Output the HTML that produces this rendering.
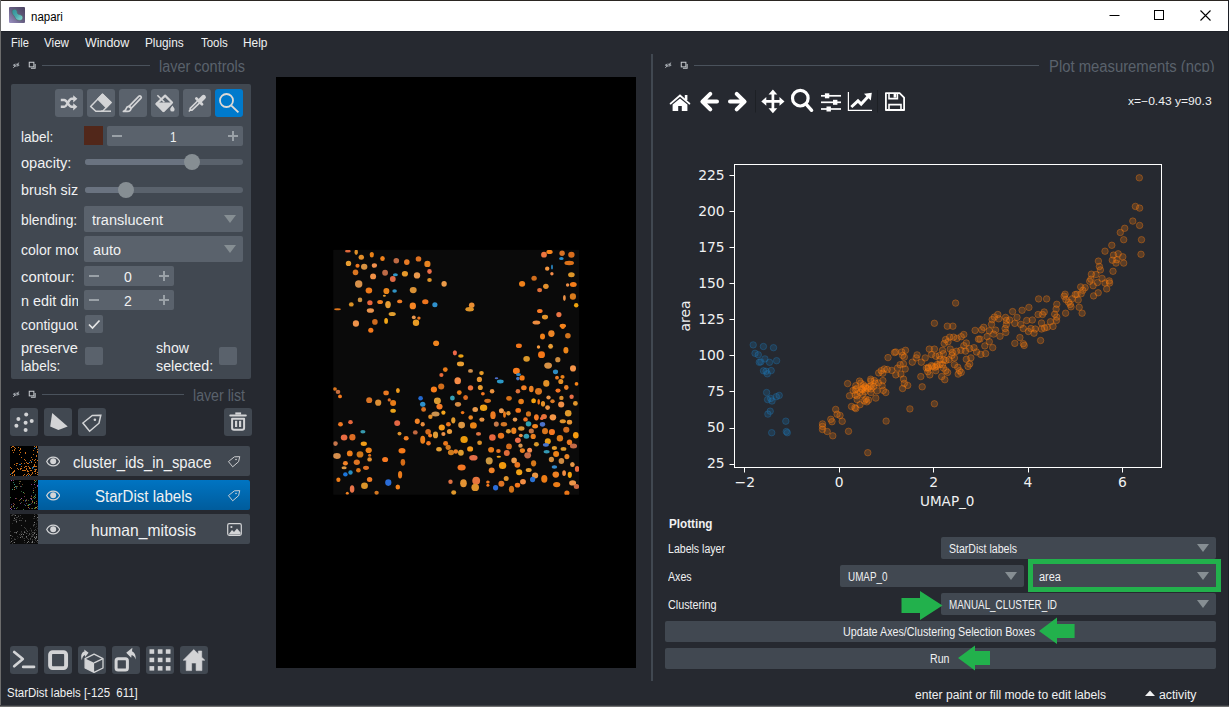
<!DOCTYPE html>
<html><head><meta charset="utf-8"><title>napari</title>
<style>
html,body{margin:0;padding:0;background:#262930;overflow:hidden}
#w{position:relative;width:1229px;height:707px;overflow:hidden;background:#262930}
.r{position:absolute;display:block}
.t{position:absolute;white-space:pre;transform-origin:0 50%;display:block}
.clip{position:absolute;overflow:hidden}
</style></head><body><div id="w">
<div class="r" style="left:0px;top:0px;width:1229px;height:1px;background:#2b2622;border-radius:0px;"></div>
<div class="r" style="left:1px;top:1px;width:1227px;height:30px;background:#ffffff;border-radius:0px;"></div>
<div class="r" style="left:1px;top:31px;width:1227px;height:1px;background:#1d2028;border-radius:0px;"></div>
<div class="r" style="left:0px;top:0px;width:1px;height:707px;background:#6c6c6c;border-radius:0px;"></div>
<div class="r" style="left:1228px;top:0px;width:1px;height:707px;background:#1c1f26;border-radius:0px;"></div>
<div class="r" style="left:0px;top:705px;width:1229px;height:1px;background:#3c3e43;border-radius:0px;"></div>
<div class="r" style="left:0px;top:706px;width:1229px;height:1px;background:#707070;border-radius:0px;"></div>
<svg class="r" style="left:9px;top:7px;" width="16" height="16" viewBox="0 0 16 16"><defs><linearGradient id="ig" x1="1" y1="0" x2="0" y2="1"><stop offset="0" stop-color="#4a4260"/><stop offset="0.55" stop-color="#6a6286"/><stop offset="1" stop-color="#9c93c4"/></linearGradient><linearGradient id="ib" x1="0" y1="0" x2="1" y2="1"><stop offset="0" stop-color="#2f8d96"/><stop offset="0.5" stop-color="#4aa8ac"/><stop offset="1" stop-color="#8cdcd6"/></linearGradient></defs><rect x="0" y="0" width="16" height="16" rx="1" fill="url(#ig)"/><path d="M3 5C2.6 3 4.4 2.2 5.6 2.2C7.4 2.2 8.2 3.6 8.2 5C8.2 6.6 9 7.4 10.6 7.6C12.8 7.8 14 9.4 13.8 11C13.6 12.8 12 13.6 10 13.4C8 13.2 6.8 12.4 6 10.6C5.4 9.2 4.8 8.6 4 7.8C3.4 7.2 3.2 6.2 3 5Z" fill="url(#ib)" stroke="#5a5e58" stroke-width="0.5"/></svg>
<span class="t" style="left:30.80px;top:10.62px;font:12.5px/12.5px 'Liberation Sans',sans-serif;color:#000000;transform:scaleX(0.9180);">napari</span>
<svg class="r" style="left:1100px;top:0px;" width="127" height="31" viewBox="0 0 127 31"><path d="M9.5 15.5H19.5" stroke="#000" stroke-width="1"/><rect x="54.5" y="10.5" width="9" height="9" fill="none" stroke="#000" stroke-width="1"/><path d="M100.5 10.5L110.5 20.5M110.5 10.5L100.5 20.5" stroke="#000" stroke-width="1.1"/></svg>
<span class="t" style="left:10.70px;top:36.62px;font:12.5px/12.5px 'Liberation Sans',sans-serif;color:#f0f1f2;transform:scaleX(0.8837);">File</span>
<span class="t" style="left:44.00px;top:36.62px;font:12.5px/12.5px 'Liberation Sans',sans-serif;color:#f0f1f2;transform:scaleX(0.9304);">View</span>
<span class="t" style="left:85.00px;top:36.62px;font:12.5px/12.5px 'Liberation Sans',sans-serif;color:#f0f1f2;transform:scaleX(0.9942);">Window</span>
<span class="t" style="left:145.40px;top:36.62px;font:12.5px/12.5px 'Liberation Sans',sans-serif;color:#f0f1f2;transform:scaleX(0.9439);">Plugins</span>
<span class="t" style="left:200.50px;top:36.62px;font:12.5px/12.5px 'Liberation Sans',sans-serif;color:#f0f1f2;transform:scaleX(0.9150);">Tools</span>
<span class="t" style="left:243.30px;top:36.62px;font:12.5px/12.5px 'Liberation Sans',sans-serif;color:#f0f1f2;transform:scaleX(0.9491);">Help</span>
<svg class="r" style="left:12px;top:60.7px;" width="8.4" height="8.4" viewBox="0 0 10 10"><path d="M1 5 C2.5 2.8 7.5 2.8 9 5 C7.5 7.2 2.5 7.2 1 5Z" fill="#9aa0a6"/><circle cx="5" cy="5" r="1.3" fill="#262930"/><path d="M1.5 8 L8.5 2" stroke="#c8ccd0" stroke-width="1"/></svg>
<svg class="r" style="left:28px;top:61.2px;" width="8.4" height="8.4" viewBox="0 0 10 10"><rect x="1.5" y="1.5" width="5.5" height="5.5" fill="none" stroke="#c8ccd0" stroke-width="1.2"/><path d="M3.5 8.5H8.5V3.5" fill="none" stroke="#c8ccd0" stroke-width="1.2"/></svg>
<div class="r" style="left:42px;top:65px;width:108px;height:1px;background:#4a525c;border-radius:0px;"></div>
<span class="t" style="left:159.00px;top:58.99px;font:15.6px/15.6px 'Liberation Sans',sans-serif;color:#5a626c;transform:scaleX(0.9270);">layer controls</span>
<div class="r" style="left:157px;top:72.4px;width:92px;height:6.599999999999994px;background:#262930;border-radius:0px;"></div>
<div class="r" style="left:11px;top:84px;width:240px;height:295px;background:#414851;border-radius:2px;"></div>
<div class="r" style="left:55px;top:89px;width:28px;height:28px;background:#5a626c;border-radius:3px;"></div>
<div class="r" style="left:87px;top:89px;width:28px;height:28px;background:#5a626c;border-radius:3px;"></div>
<div class="r" style="left:119px;top:89px;width:28px;height:28px;background:#5a626c;border-radius:3px;"></div>
<div class="r" style="left:151px;top:89px;width:28px;height:28px;background:#5a626c;border-radius:3px;"></div>
<div class="r" style="left:183px;top:89px;width:28px;height:28px;background:#5a626c;border-radius:3px;"></div>
<div class="r" style="left:215px;top:89px;width:28px;height:28px;background:#007acc;border-radius:3px;"></div>
<div class="r" style="left:84px;top:126px;width:19px;height:19px;background:#51271a;border-radius:0px;"></div>
<div class="r" style="left:107px;top:126px;width:136px;height:20px;background:#5a626c;border-radius:2px;"></div>
<span class="t" style="left:21.00px;top:128.68px;font:15.5px/15.5px 'Liberation Sans',sans-serif;color:#f0f1f2;transform:scaleX(0.8717);">label:</span>
<div class="r" style="left:112px;top:134.95000000000002px;width:9.799999999999997px;height:1.6999999999999886px;background:#9aa1a7;border-radius:0px;"></div>
<div class="r" style="left:228px;top:134.95000000000002px;width:10px;height:1.6999999999999886px;background:#9aa1a7;border-radius:0px;"></div>
<div class="r" style="left:232.15px;top:130.8px;width:1.6999999999999886px;height:10.0px;background:#9aa1a7;border-radius:0px;"></div>
<span class="t" style="left:169.50px;top:128.68px;font:15.5px/15.5px 'Liberation Sans',sans-serif;color:#f0f1f2;transform:scaleX(0.7540);">1</span>
<span class="t" style="left:21.00px;top:154.68px;font:15.5px/15.5px 'Liberation Sans',sans-serif;color:#f0f1f2;transform:scaleX(0.9416);">opacity:</span>
<div class="r" style="left:85px;top:159px;width:158px;height:6px;background:#5a626c;border-radius:3px;"></div>
<div class="r" style="left:85px;top:159px;width:107px;height:6px;background:#6a7380;border-radius:3px;"></div>
<div class="r" style="left:184px;top:154px;width:16px;height:16px;background:#868e93;border-radius:8px;"></div>
<div class="clip" style="left:21.00px;top:179.18px;width:57.00px;height:23.5px"><span class="t" style="left:0;top:3px;font:15.5px/15.5px 'Liberation Sans',sans-serif;color:#f0f1f2;transform:scaleX(0.9190);">brush size:</span></div>
<div class="r" style="left:85px;top:187px;width:158px;height:6px;background:#5a626c;border-radius:3px;"></div>
<div class="r" style="left:85px;top:187px;width:41px;height:6px;background:#6a7380;border-radius:3px;"></div>
<div class="r" style="left:118px;top:182px;width:16px;height:16px;background:#868e93;border-radius:8px;"></div>
<span class="t" style="left:21.00px;top:212.28px;font:15.5px/15.5px 'Liberation Sans',sans-serif;color:#f0f1f2;transform:scaleX(0.8932);">blending:</span>
<div class="r" style="left:84px;top:206px;width:159px;height:26px;background:#5a626c;border-radius:2px;"></div>
<span class="t" style="left:92.00px;top:212.08px;font:15.5px/15.5px 'Liberation Sans',sans-serif;color:#f0f1f2;transform:scaleX(0.9364);">translucent</span>
<svg class="r" style="left:224px;top:215px;" width="12" height="8" viewBox="0 0 12 8"><path d="M0 0H12L6 8Z" fill="#868e93"/></svg>
<div class="clip" style="left:21.00px;top:239.28px;width:57.00px;height:23.5px"><span class="t" style="left:0;top:3px;font:15.5px/15.5px 'Liberation Sans',sans-serif;color:#f0f1f2;transform:scaleX(0.9064);">color mode:</span></div>
<div class="r" style="left:84px;top:236px;width:159px;height:26px;background:#5a626c;border-radius:2px;"></div>
<span class="t" style="left:92.50px;top:242.08px;font:15.5px/15.5px 'Liberation Sans',sans-serif;color:#f0f1f2;transform:scaleX(0.9281);">auto</span>
<svg class="r" style="left:224px;top:245px;" width="12" height="8" viewBox="0 0 12 8"><path d="M0 0H12L6 8Z" fill="#868e93"/></svg>
<span class="t" style="left:21.00px;top:268.78px;font:15.5px/15.5px 'Liberation Sans',sans-serif;color:#f0f1f2;transform:scaleX(0.9552);">contour:</span>
<div class="r" style="left:84px;top:266px;width:90px;height:20px;background:#5a626c;border-radius:2px;"></div>
<div class="r" style="left:89px;top:274.95px;width:9.799999999999997px;height:1.7000000000000455px;background:#9aa1a7;border-radius:0px;"></div>
<div class="r" style="left:159px;top:274.95px;width:10px;height:1.7000000000000455px;background:#9aa1a7;border-radius:0px;"></div>
<div class="r" style="left:163.15px;top:270.8px;width:1.6999999999999886px;height:10.0px;background:#9aa1a7;border-radius:0px;"></div>
<span class="t" style="left:124.00px;top:268.78px;font:15.5px/15.5px 'Liberation Sans',sans-serif;color:#f0f1f2;transform:scaleX(0.9048);">0</span>
<div class="clip" style="left:21.00px;top:290.08px;width:57.00px;height:23.5px"><span class="t" style="left:0;top:3px;font:15.5px/15.5px 'Liberation Sans',sans-serif;color:#f0f1f2;transform:scaleX(0.9285);">n edit dim:</span></div>
<div class="r" style="left:84px;top:290px;width:90px;height:20px;background:#5a626c;border-radius:2px;"></div>
<div class="r" style="left:89px;top:299.25px;width:9.799999999999997px;height:1.7000000000000455px;background:#9aa1a7;border-radius:0px;"></div>
<div class="r" style="left:159px;top:299.25px;width:10px;height:1.7000000000000455px;background:#9aa1a7;border-radius:0px;"></div>
<div class="r" style="left:163.15px;top:295.1px;width:1.6999999999999886px;height:10.0px;background:#9aa1a7;border-radius:0px;"></div>
<span class="t" style="left:124.00px;top:292.78px;font:15.5px/15.5px 'Liberation Sans',sans-serif;color:#f0f1f2;transform:scaleX(0.9048);">2</span>
<div class="clip" style="left:21.00px;top:313.88px;width:57.00px;height:23.5px"><span class="t" style="left:0;top:3px;font:15.5px/15.5px 'Liberation Sans',sans-serif;color:#f0f1f2;transform:scaleX(0.8998);">contiguous:</span></div>
<div class="r" style="left:85px;top:315px;width:18px;height:18px;background:#5a626c;border-radius:2px;"></div>
<svg class="r" style="left:85px;top:315px;" width="18" height="18" viewBox="0 0 18 18"><path d="M4 9.5L7.5 13L14.5 5.5" fill="none" stroke="#e6e6e6" stroke-width="1.7"/></svg>
<span class="t" style="left:21.00px;top:339.58px;font:15.5px/15.5px 'Liberation Sans',sans-serif;color:#f0f1f2;transform:scaleX(0.9418);">preserve</span>
<span class="t" style="left:21.00px;top:357.58px;font:15.5px/15.5px 'Liberation Sans',sans-serif;color:#f0f1f2;transform:scaleX(0.8771);">labels:</span>
<div class="r" style="left:85px;top:347px;width:18px;height:18px;background:#5a626c;border-radius:2px;"></div>
<span class="t" style="left:156.00px;top:339.58px;font:15.5px/15.5px 'Liberation Sans',sans-serif;color:#f0f1f2;transform:scaleX(0.9120);">show</span>
<span class="t" style="left:156.00px;top:357.58px;font:15.5px/15.5px 'Liberation Sans',sans-serif;color:#f0f1f2;transform:scaleX(0.9220);">selected:</span>
<div class="r" style="left:219px;top:347px;width:18px;height:18px;background:#5a626c;border-radius:2px;"></div>
<svg class="r" style="left:12px;top:389.7px;" width="8.4" height="8.4" viewBox="0 0 10 10"><path d="M1 5 C2.5 2.8 7.5 2.8 9 5 C7.5 7.2 2.5 7.2 1 5Z" fill="#9aa0a6"/><circle cx="5" cy="5" r="1.3" fill="#262930"/><path d="M1.5 8 L8.5 2" stroke="#c8ccd0" stroke-width="1"/></svg>
<svg class="r" style="left:28px;top:390.2px;" width="8.4" height="8.4" viewBox="0 0 10 10"><rect x="1.5" y="1.5" width="5.5" height="5.5" fill="none" stroke="#c8ccd0" stroke-width="1.2"/><path d="M3.5 8.5H8.5V3.5" fill="none" stroke="#c8ccd0" stroke-width="1.2"/></svg>
<div class="r" style="left:42px;top:394px;width:142px;height:1px;background:#4a525c;border-radius:0px;"></div>
<span class="t" style="left:193.00px;top:387.99px;font:15.6px/15.6px 'Liberation Sans',sans-serif;color:#5a626c;transform:scaleX(0.9089);">layer list</span>
<div class="r" style="left:191px;top:401.4px;width:58px;height:6.600000000000023px;background:#262930;border-radius:0px;"></div>
<div class="r" style="left:10px;top:408px;width:28px;height:28px;background:#414851;border-radius:3px;"></div>
<div class="r" style="left:44px;top:408px;width:28px;height:28px;background:#414851;border-radius:3px;"></div>
<div class="r" style="left:78px;top:408px;width:28px;height:28px;background:#414851;border-radius:3px;"></div>
<div class="r" style="left:224px;top:408px;width:28px;height:28px;background:#414851;border-radius:3px;"></div>
<div class="r" style="left:10px;top:446px;width:240px;height:30px;background:#414851;border-radius:2px;"></div>
<div class="r" style="left:10px;top:446px;width:28px;height:30px;background:#000;border-radius:0px;"></div>
<span class="t" style="left:73.00px;top:453.53px;font:16.5px/16.5px 'Liberation Sans',sans-serif;color:#f0f1f2;transform:scaleX(0.8988);">cluster_ids_in_space</span>
<div class="r" style="left:10px;top:480px;width:240px;height:30px;background:#0070bb;border-radius:2px;background:linear-gradient(#0074c2,#005c9c);"></div>
<div class="r" style="left:10px;top:480px;width:28px;height:30px;background:#000;border-radius:0px;"></div>
<span class="t" style="left:94.50px;top:487.53px;font:16.5px/16.5px 'Liberation Sans',sans-serif;color:#f0f1f2;transform:scaleX(0.9119);">StarDist labels</span>
<div class="r" style="left:10px;top:514px;width:240px;height:30px;background:#414851;border-radius:2px;"></div>
<div class="r" style="left:10px;top:514px;width:28px;height:30px;background:#000;border-radius:0px;"></div>
<span class="t" style="left:90.50px;top:521.53px;font:16.5px/16.5px 'Liberation Sans',sans-serif;color:#f0f1f2;transform:scaleX(0.9462);">human_mitosis</span>
<div class="r" style="left:10px;top:646px;width:28px;height:28px;background:#414851;border-radius:3px;"></div>
<div class="r" style="left:44px;top:646px;width:28px;height:28px;background:#414851;border-radius:3px;"></div>
<div class="r" style="left:78px;top:646px;width:28px;height:28px;background:#414851;border-radius:3px;"></div>
<div class="r" style="left:112px;top:646px;width:28px;height:28px;background:#414851;border-radius:3px;"></div>
<div class="r" style="left:146px;top:646px;width:28px;height:28px;background:#414851;border-radius:3px;"></div>
<div class="r" style="left:180px;top:646px;width:28px;height:28px;background:#414851;border-radius:3px;"></div>
<span class="t" style="left:7.20px;top:687.22px;font:12.5px/12.5px 'Liberation Sans',sans-serif;color:#f0f1f2;transform:scaleX(0.9153);">StarDist labels [-125  611]</span>
<div class="r" style="left:276px;top:77px;width:360px;height:591px;background:#000;border-radius:0px;"></div>
<svg class="r" style="left:55px;top:89px;" width="28" height="28" viewBox="0 0 28 28"><g fill="none" stroke="#d3d4d6" stroke-width="2.4"><path d="M5.8 11H9.2C12.4 11 13.4 17.8 16.6 17.8H19"/><path d="M5.8 17.8H9.2C12.4 17.8 13.4 9.8 16.6 9.8H19"/></g><path d="M18.2 6.2L22.4 9.8L18.2 13.4Z M18.2 14.2L22.4 17.8L18.2 21.4Z" fill="#d3d4d6"/></svg>
<svg class="r" style="left:87px;top:89px;" width="28" height="28" viewBox="0 0 28 28"><path d="M15.5 5.2L24 13.6L15.6 22.2H8.8L3.6 17.4Z" fill="none" stroke="#d3d4d6" stroke-width="1.5" stroke-linejoin="round"/><path d="M15.5 5.2L24 13.6L19.2 18.5L10.8 10Z" fill="#d3d4d6" stroke="#d3d4d6" stroke-width="1.5" stroke-linejoin="round"/><path d="M14 22.2H24" stroke="#d3d4d6" stroke-width="1.5"/></svg>
<svg class="r" style="left:119px;top:89px;" width="28" height="28" viewBox="0 0 28 28"><path d="M20 7.2L10.2 17.2L12.4 19.2L22 9.2C23 8 21.2 6.2 20 7.2Z" fill="none" stroke="#d3d4d6" stroke-width="1.7" stroke-linejoin="round"/><path d="M9.6 17.4C7.4 17.4 7.2 19.6 6.6 20.8C6 21.8 5 22.2 4.4 22.4H8.4C10.8 22.4 12.4 20.6 11.8 19Z" fill="none" stroke="#d3d4d6" stroke-width="1.7" stroke-linejoin="round"/></svg>
<svg class="r" style="left:151px;top:89px;" width="28" height="28" viewBox="0 0 28 28"><path d="M14.1 6.6L21 13.5L12.5 22L5.4 15Z" fill="none" stroke="#d3d4d6" stroke-width="2.2" stroke-linejoin="round"/><path d="M5.8 14.4H20.2L12.5 22Z" fill="#d3d4d6" stroke="#d3d4d6" stroke-width="2" stroke-linejoin="round"/><path d="M6.4 6.2L13.4 13.2" stroke="#d3d4d6" stroke-width="1.6"/><path d="M21.4 16.6C22.6 18.4 23.6 19.4 23.6 20.4A2.2 2.2 0 0 1 19.2 20.4C19.2 19.4 20.2 18.4 21.4 16.6Z" fill="#d3d4d6"/></svg>
<svg class="r" style="left:183px;top:89px;" width="28" height="28" viewBox="0 0 28 28"><path d="M20.6 8.2L17.6 11.2" stroke="#d3d4d6" stroke-width="4.6" stroke-linecap="round"/><path d="M13.4 9.6L19 15.2" stroke="#d3d4d6" stroke-width="2.8" stroke-linecap="round"/><path d="M14.6 12L7.2 19.4V21.2H9L16.6 13.8" fill="none" stroke="#d3d4d6" stroke-width="1.7"/><path d="M7.6 20.8L5.8 22.6" stroke="#d3d4d6" stroke-width="1.4"/></svg>
<svg class="r" style="left:215px;top:89px;" width="28" height="28" viewBox="0 0 28 28"><circle cx="11.5" cy="11.5" r="6.5" fill="none" stroke="#dedad6" stroke-width="1.8"/><path d="M16.4 16.6L23.4 23.4" stroke="#dedad6" stroke-width="1.9"/></svg>
<svg class="r" style="left:10px;top:408px;" width="28" height="28" viewBox="0 0 28 28"><circle cx="16.2" cy="6.6" r="2" fill="#d3d4d6"/><circle cx="8.4" cy="11" r="2" fill="#d3d4d6"/><circle cx="21.7" cy="13" r="2" fill="#d3d4d6"/><circle cx="15.6" cy="14.8" r="2" fill="#d3d4d6"/><circle cx="6.4" cy="17.7" r="2" fill="#d3d4d6"/><circle cx="15.6" cy="22" r="2" fill="#d3d4d6"/></svg>
<svg class="r" style="left:44px;top:408px;" width="28" height="28" viewBox="0 0 28 28"><path d="M8.2 5L23.7 18.4L14.4 22.1L6.2 18.4Z" fill="#d3d4d6"/></svg>
<svg class="r" style="left:78px;top:408px;" width="28" height="28" viewBox="0 0 28 28"><path d="M22.8 7.2L14.3 7.5L4.9 15L11.6 23.3L21 15.2Z" fill="none" stroke="#d3d4d6" stroke-width="1.5" stroke-linejoin="miter"/><circle cx="16.9" cy="11.8" r="1.3" fill="#d3d4d6"/></svg>
<svg class="r" style="left:224px;top:408px;" width="28" height="28" viewBox="0 0 28 28"><rect x="11.3" y="4.4" width="5.8" height="2.2" fill="#d3d4d6"/><rect x="5.3" y="6.5" width="17.5" height="2.1" rx="1" fill="#d3d4d6"/><path d="M8.1 10.7V20C8.1 21.2 8.8 21.8 10 21.8H18.2C19.4 21.8 20.1 21.2 20.1 20V10.7Z" fill="none" stroke="#d3d4d6" stroke-width="2" stroke-linejoin="round"/><rect x="11" y="12.8" width="2.2" height="6.2" fill="#d3d4d6"/><rect x="15" y="12.8" width="2.2" height="6.2" fill="#d3d4d6"/></svg>
<svg class="r" style="left:45.8px;top:455.7px;" width="14.4" height="11" viewBox="0 0 14.4 11"><path d="M0.7 5.5C3.4 -0.4 11 -0.4 13.7 5.5C11 11.4 3.4 11.4 0.7 5.5Z" fill="none" stroke="#d3d4d6" stroke-width="1.2"/><circle cx="7.2" cy="5.3" r="3" fill="#d3d4d6"/></svg>
<svg class="r" style="left:45.8px;top:489.7px;" width="14.4" height="11" viewBox="0 0 14.4 11"><path d="M0.7 5.5C3.4 -0.4 11 -0.4 13.7 5.5C11 11.4 3.4 11.4 0.7 5.5Z" fill="none" stroke="#d3d4d6" stroke-width="1.2"/><circle cx="7.2" cy="5.3" r="3" fill="#d3d4d6"/></svg>
<svg class="r" style="left:45.8px;top:523.7px;" width="14.4" height="11" viewBox="0 0 14.4 11"><path d="M0.7 5.5C3.4 -0.4 11 -0.4 13.7 5.5C11 11.4 3.4 11.4 0.7 5.5Z" fill="none" stroke="#d3d4d6" stroke-width="1.2"/><circle cx="7.2" cy="5.3" r="3" fill="#d3d4d6"/></svg>
<svg class="r" style="left:226px;top:453.6px;" width="16.4" height="16.4" viewBox="1 3 26 26"><path d="M22.8 7.2L14.3 7.5L4.9 15L11.6 23.3L21 15.2Z" fill="none" stroke="#d3d4d6" stroke-width="1.5" stroke-linejoin="miter"/><circle cx="16.9" cy="11.8" r="1.3" fill="#d3d4d6"/></svg>
<svg class="r" style="left:226px;top:487.6px;" width="16.4" height="16.4" viewBox="1 3 26 26"><path d="M22.8 7.2L14.3 7.5L4.9 15L11.6 23.3L21 15.2Z" fill="none" stroke="#d3d4d6" stroke-width="1.5" stroke-linejoin="miter"/><circle cx="16.9" cy="11.8" r="1.3" fill="#d3d4d6"/></svg>
<svg class="r" style="left:226.5px;top:522.5px;" width="15" height="13" viewBox="0 0 15 13"><rect x="0.7" y="0.7" width="13.6" height="11.6" rx="1.5" fill="none" stroke="#d3d4d6" stroke-width="1.2"/><path d="M1.5 11.5L5 7L7 9L10 5.5L13.5 9.5V11.5Z" fill="#d3d4d6"/><circle cx="4.4" cy="4" r="1.1" fill="#d3d4d6"/></svg>
<svg class="r" style="left:10px;top:646px;" width="28" height="28" viewBox="0 0 28 28"><path d="M4.2 6L12.8 13L4.2 20.2M13.2 20.9H24" fill="none" stroke="#d3d4d6" stroke-width="2.7" stroke-linecap="round" stroke-linejoin="round"/></svg>
<svg class="r" style="left:44px;top:646px;" width="28" height="28" viewBox="0 0 28 28"><rect x="6.1" y="6.1" width="16" height="16" rx="2.6" fill="none" stroke="#d3d4d6" stroke-width="3.9"/></svg>
<svg class="r" style="left:78px;top:646px;" width="28" height="28" viewBox="0 0 28 28"><path d="M16.1 8.1L25 12.6V22L16.1 26.4L7.1 22V12.6Z" fill="#414851" stroke="#d3d4d6" stroke-width="1.3" stroke-linejoin="round"/><path d="M7.1 12.6L16.1 16.8V26.4L7.1 22Z" fill="#d3d4d6"/><path d="M16.1 16.8L25 12.6" stroke="#d3d4d6" stroke-width="1.3"/><path transform="translate(0,1.3)" d="M10.6 5.4L6.2 2.2L6.5 4.2C3.4 4.8 2.4 8.6 3.9 13C4.3 9.8 5.2 8.2 6.9 7.6L7.2 9.6Z" fill="#d3d4d6"/></svg>
<svg class="r" style="left:112px;top:646px;" width="28" height="28" viewBox="0 0 28 28"><rect x="4.1" y="12.7" width="11.3" height="11.3" rx="2" fill="none" stroke="#d3d4d6" stroke-width="3"/><path d="M14.2 6.8L20.4 1.8L20 5.2C22.8 6.4 24 9.6 23.7 13.4C22.6 10.6 21.2 9.4 19.6 9L19.2 11.8Z" fill="#d3d4d6"/></svg>
<svg class="r" style="left:146px;top:646px;" width="28" height="28" viewBox="0 0 28 28"><rect x="3.5" y="3.3" width="4.7" height="4.5" fill="#d3d4d6"/><rect x="3.5" y="11.7" width="4.7" height="4.5" fill="#d3d4d6"/><rect x="3.5" y="20.1" width="4.7" height="4.5" fill="#d3d4d6"/><rect x="11.8" y="3.3" width="4.7" height="4.5" fill="#d3d4d6"/><rect x="11.8" y="11.7" width="4.7" height="4.5" fill="#d3d4d6"/><rect x="11.8" y="20.1" width="4.7" height="4.5" fill="#d3d4d6"/><rect x="19.8" y="3.3" width="4.7" height="4.5" fill="#d3d4d6"/><rect x="19.8" y="11.7" width="4.7" height="4.5" fill="#d3d4d6"/><rect x="19.8" y="20.1" width="4.7" height="4.5" fill="#d3d4d6"/></svg>
<svg class="r" style="left:180px;top:646px;" width="28" height="28" viewBox="0 0 28 28"><path d="M13.8 3.6L18.3 8V5H21.7V11.2L24.8 14.2H21.9V24.6H16.1V17H11.6V24.6H6.2V14.2H3.2Z" fill="#d3d4d6" stroke="#d3d4d6" stroke-width="0.6" stroke-linejoin="round"/></svg>
<div class="r" style="left:651px;top:54px;width:2px;height:627px;background:#414851;border-radius:0px;"></div>
<svg class="r" style="left:664.4px;top:60.7px;" width="8.4" height="8.4" viewBox="0 0 10 10"><path d="M1 5 C2.5 2.8 7.5 2.8 9 5 C7.5 7.2 2.5 7.2 1 5Z" fill="#9aa0a6"/><circle cx="5" cy="5" r="1.3" fill="#262930"/><path d="M1.5 8 L8.5 2" stroke="#c8ccd0" stroke-width="1"/></svg>
<svg class="r" style="left:680.4px;top:61.2px;" width="8.4" height="8.4" viewBox="0 0 10 10"><rect x="1.5" y="1.5" width="5.5" height="5.5" fill="none" stroke="#c8ccd0" stroke-width="1.2"/><path d="M3.5 8.5H8.5V3.5" fill="none" stroke="#c8ccd0" stroke-width="1.2"/></svg>
<div class="r" style="left:694px;top:65px;width:345px;height:1px;background:#4a525c;border-radius:0px;"></div>
<span class="t" style="left:1048.60px;top:58.99px;font:15.6px/15.6px 'Liberation Sans',sans-serif;color:#5a626c;transform:scaleX(0.9508);">Plot measurements (ncp)</span>
<div class="r" style="left:1046.6px;top:72.4px;width:171.70000000000005px;height:6.599999999999994px;background:#262930;border-radius:0px;"></div>
<svg class="r" style="left:660px;top:85px;" width="260" height="34" viewBox="0 0 260 34"><path d="M10.600000000000023 18.599999999999994L20 10.599999999999994L29.399999999999977 18.599999999999994" fill="none" stroke="#ffffff" stroke-width="1.9" stroke-linecap="round" stroke-linejoin="miter"/><path d="M12.600000000000023 19.599999999999994L20 13.400000000000006L27.399999999999977 19.599999999999994V26H21.799999999999955V21H18.200000000000045V26H12.600000000000023Z" fill="#ffffff"/><rect x="24.799999999999955" y="10" width="2.6" height="5" fill="#ffffff"/><path d="M50.299999999999955 8.799999999999997L42.39999999999998 16.599999999999994L50.299999999999955 24.400000000000006M43 16.599999999999994H57" fill="none" stroke="#ffffff" stroke-width="4" stroke-linecap="round" stroke-linejoin="round"/><path d="M76.70000000000005 8.799999999999997L84.60000000000002 16.599999999999994L76.70000000000005 24.400000000000006M84 16.599999999999994H70" fill="none" stroke="#ffffff" stroke-width="4" stroke-linecap="round" stroke-linejoin="round"/><path d="M95.5 5V27.5M217.5 5V27.5" stroke="#1d2025" stroke-width="1"/><path d="M112.89999999999998 7V26M104 16.400000000000006H122" stroke="#ffffff" stroke-width="2.7"/><path d="M112.89999999999998 4.5l4.4 5h-8.8zM112.89999999999998 28.299999999999997l4.4 -5h-8.8zM101.29999999999995 16.400000000000006l5 -4.4v8.8zM124.5 16.400000000000006l-5 -4.4v8.8z" fill="#ffffff"/><circle cx="140.29999999999995" cy="13.200000000000003" r="7.8" fill="none" stroke="#ffffff" stroke-width="3.2"/><path d="M146.29999999999995 19.400000000000006L151.60000000000002 25.299999999999997" stroke="#ffffff" stroke-width="3.4" stroke-linecap="round"/><path d="M161 10.799999999999997H181" stroke="#ffffff" stroke-width="1.7"/><rect x="164.90000000000003" y="8.299999999999997" width="4.4" height="5" fill="#ffffff"/><path d="M161 17.299999999999997H181" stroke="#ffffff" stroke-width="1.7"/><rect x="173.00000000000006" y="14.799999999999997" width="4.4" height="5" fill="#ffffff"/><path d="M161 24H181" stroke="#ffffff" stroke-width="1.7"/><rect x="166.50000000000006" y="21.5" width="4.4" height="5" fill="#ffffff"/><path d="M188.39999999999998 6.900000000000006V25.400000000000006H212" fill="none" stroke="#ffffff" stroke-width="1.2"/><path d="M191.29999999999995 22L198 15.900000000000006L201.20000000000005 19L208.60000000000002 11" fill="none" stroke="#ffffff" stroke-width="3"/><path d="M211.79999999999995 7.799999999999997L204 8.799999999999997L210.79999999999995 15.599999999999994Z" fill="#ffffff"/><path d="M225.89999999999998 8.099999999999994H239.60000000000002L244.10000000000002 12.599999999999994V25H225.89999999999998Z" fill="none" stroke="#ffffff" stroke-width="1.8" stroke-linejoin="round"/><path d="M229 8V13.599999999999994H237.39999999999998V8" fill="none" stroke="#ffffff" stroke-width="1.6"/><rect x="233.60000000000002" y="8.599999999999994" width="2.6" height="4" fill="#ffffff"/><path d="M229 25V19.599999999999994H241V25" fill="none" stroke="#ffffff" stroke-width="1.6"/></svg>
<span class="t" style="left:1127.60px;top:96.17px;font:11.5px/11.5px 'Liberation Sans',sans-serif;color:#f0f1f2;transform:scaleX(1.0501);">x=−0.43 y=90.3</span>
<svg class="r" style="left:660px;top:150px;" width="569" height="370" viewBox="660 150 569 370"><rect x="734.5" y="164.5" width="427" height="303" fill="none" stroke="#ffffff" stroke-width="1"/><path d="M729.5 464.5H734" stroke="#ffffff" stroke-width="1"/><path d="M729.5 428.5H734" stroke="#ffffff" stroke-width="1"/><path d="M729.5 391.5H734" stroke="#ffffff" stroke-width="1"/><path d="M729.5 355.5H734" stroke="#ffffff" stroke-width="1"/><path d="M729.5 319.5H734" stroke="#ffffff" stroke-width="1"/><path d="M729.5 283.5H734" stroke="#ffffff" stroke-width="1"/><path d="M729.5 247.5H734" stroke="#ffffff" stroke-width="1"/><path d="M729.5 211.5H734" stroke="#ffffff" stroke-width="1"/><path d="M729.5 175.5H734" stroke="#ffffff" stroke-width="1"/><path d="M744.5 468V472.5" stroke="#ffffff" stroke-width="1"/><path d="M839.5 468V472.5" stroke="#ffffff" stroke-width="1"/><path d="M933.5 468V472.5" stroke="#ffffff" stroke-width="1"/><path d="M1028.5 468V472.5" stroke="#ffffff" stroke-width="1"/><path d="M1122.5 468V472.5" stroke="#ffffff" stroke-width="1"/><circle cx="753.2" cy="344.9" r="3.25" fill="#1f77b4" fill-opacity=".24" stroke="#1f77b4" stroke-opacity=".36"/><circle cx="763.4" cy="346.5" r="3.25" fill="#1f77b4" fill-opacity=".24" stroke="#1f77b4" stroke-opacity=".36"/><circle cx="773.5" cy="347.7" r="3.25" fill="#1f77b4" fill-opacity=".24" stroke="#1f77b4" stroke-opacity=".36"/><circle cx="755.0" cy="353.3" r="3.25" fill="#1f77b4" fill-opacity=".24" stroke="#1f77b4" stroke-opacity=".36"/><circle cx="758.3" cy="354.8" r="3.25" fill="#1f77b4" fill-opacity=".24" stroke="#1f77b4" stroke-opacity=".36"/><circle cx="764.9" cy="358.9" r="3.25" fill="#1f77b4" fill-opacity=".24" stroke="#1f77b4" stroke-opacity=".36"/><circle cx="776.6" cy="360.7" r="3.25" fill="#1f77b4" fill-opacity=".24" stroke="#1f77b4" stroke-opacity=".36"/><circle cx="759.3" cy="362.3" r="3.25" fill="#1f77b4" fill-opacity=".24" stroke="#1f77b4" stroke-opacity=".36"/><circle cx="760.8" cy="361.9" r="3.25" fill="#1f77b4" fill-opacity=".24" stroke="#1f77b4" stroke-opacity=".36"/><circle cx="769.5" cy="362.3" r="3.25" fill="#1f77b4" fill-opacity=".24" stroke="#1f77b4" stroke-opacity=".36"/><circle cx="763.5" cy="370.8" r="3.25" fill="#1f77b4" fill-opacity=".24" stroke="#1f77b4" stroke-opacity=".36"/><circle cx="771.2" cy="370.6" r="3.25" fill="#1f77b4" fill-opacity=".24" stroke="#1f77b4" stroke-opacity=".36"/><circle cx="766.1" cy="371.3" r="3.25" fill="#1f77b4" fill-opacity=".24" stroke="#1f77b4" stroke-opacity=".36"/><circle cx="767.3" cy="373.8" r="3.25" fill="#1f77b4" fill-opacity=".24" stroke="#1f77b4" stroke-opacity=".36"/><circle cx="766.6" cy="392.5" r="3.25" fill="#1f77b4" fill-opacity=".24" stroke="#1f77b4" stroke-opacity=".36"/><circle cx="779.2" cy="395.4" r="3.25" fill="#1f77b4" fill-opacity=".24" stroke="#1f77b4" stroke-opacity=".36"/><circle cx="776.3" cy="396.7" r="3.25" fill="#1f77b4" fill-opacity=".24" stroke="#1f77b4" stroke-opacity=".36"/><circle cx="767.6" cy="399.6" r="3.25" fill="#1f77b4" fill-opacity=".24" stroke="#1f77b4" stroke-opacity=".36"/><circle cx="770.7" cy="398.4" r="3.25" fill="#1f77b4" fill-opacity=".24" stroke="#1f77b4" stroke-opacity=".36"/><circle cx="772.0" cy="401.0" r="3.25" fill="#1f77b4" fill-opacity=".24" stroke="#1f77b4" stroke-opacity=".36"/><circle cx="770.2" cy="411.2" r="3.25" fill="#1f77b4" fill-opacity=".24" stroke="#1f77b4" stroke-opacity=".36"/><circle cx="767.9" cy="414.1" r="3.25" fill="#1f77b4" fill-opacity=".24" stroke="#1f77b4" stroke-opacity=".36"/><circle cx="785.8" cy="421.2" r="3.25" fill="#1f77b4" fill-opacity=".24" stroke="#1f77b4" stroke-opacity=".36"/><circle cx="771.7" cy="432.7" r="3.25" fill="#1f77b4" fill-opacity=".24" stroke="#1f77b4" stroke-opacity=".36"/><circle cx="786.3" cy="431.5" r="3.25" fill="#1f77b4" fill-opacity=".24" stroke="#1f77b4" stroke-opacity=".36"/><circle cx="787.3" cy="432.7" r="3.25" fill="#1f77b4" fill-opacity=".24" stroke="#1f77b4" stroke-opacity=".36"/><circle cx="822.5" cy="423.9" r="3.25" fill="#ff7f0e" fill-opacity=".24" stroke="#ff7f0e" stroke-opacity=".36"/><circle cx="822.5" cy="426.4" r="3.25" fill="#ff7f0e" fill-opacity=".24" stroke="#ff7f0e" stroke-opacity=".36"/><circle cx="822.5" cy="429.5" r="3.25" fill="#ff7f0e" fill-opacity=".24" stroke="#ff7f0e" stroke-opacity=".36"/><circle cx="827.2" cy="431.5" r="3.25" fill="#ff7f0e" fill-opacity=".24" stroke="#ff7f0e" stroke-opacity=".36"/><circle cx="832.8" cy="435.8" r="3.25" fill="#ff7f0e" fill-opacity=".24" stroke="#ff7f0e" stroke-opacity=".36"/><circle cx="830.8" cy="419.3" r="3.25" fill="#ff7f0e" fill-opacity=".24" stroke="#ff7f0e" stroke-opacity=".36"/><circle cx="832.0" cy="421.7" r="3.25" fill="#ff7f0e" fill-opacity=".24" stroke="#ff7f0e" stroke-opacity=".36"/><circle cx="835.7" cy="409.4" r="3.25" fill="#ff7f0e" fill-opacity=".24" stroke="#ff7f0e" stroke-opacity=".36"/><circle cx="837.1" cy="414.2" r="3.25" fill="#ff7f0e" fill-opacity=".24" stroke="#ff7f0e" stroke-opacity=".36"/><circle cx="840.0" cy="415.4" r="3.25" fill="#ff7f0e" fill-opacity=".24" stroke="#ff7f0e" stroke-opacity=".36"/><circle cx="842.2" cy="421.3" r="3.25" fill="#ff7f0e" fill-opacity=".24" stroke="#ff7f0e" stroke-opacity=".36"/><circle cx="848.5" cy="431.3" r="3.25" fill="#ff7f0e" fill-opacity=".24" stroke="#ff7f0e" stroke-opacity=".36"/><circle cx="867.8" cy="452.7" r="3.25" fill="#ff7f0e" fill-opacity=".24" stroke="#ff7f0e" stroke-opacity=".36"/><circle cx="886.1" cy="421.1" r="3.25" fill="#ff7f0e" fill-opacity=".24" stroke="#ff7f0e" stroke-opacity=".36"/><circle cx="847.6" cy="383.6" r="3.25" fill="#ff7f0e" fill-opacity=".24" stroke="#ff7f0e" stroke-opacity=".36"/><circle cx="849.5" cy="395.8" r="3.25" fill="#ff7f0e" fill-opacity=".24" stroke="#ff7f0e" stroke-opacity=".36"/><circle cx="851.5" cy="406.5" r="3.25" fill="#ff7f0e" fill-opacity=".24" stroke="#ff7f0e" stroke-opacity=".36"/><circle cx="854.9" cy="407.7" r="3.25" fill="#ff7f0e" fill-opacity=".24" stroke="#ff7f0e" stroke-opacity=".36"/><circle cx="855.8" cy="408.6" r="3.25" fill="#ff7f0e" fill-opacity=".24" stroke="#ff7f0e" stroke-opacity=".36"/><circle cx="860.0" cy="404.7" r="3.25" fill="#ff7f0e" fill-opacity=".24" stroke="#ff7f0e" stroke-opacity=".36"/><circle cx="857.1" cy="399.6" r="3.25" fill="#ff7f0e" fill-opacity=".24" stroke="#ff7f0e" stroke-opacity=".36"/><circle cx="855.4" cy="389.4" r="3.25" fill="#ff7f0e" fill-opacity=".24" stroke="#ff7f0e" stroke-opacity=".36"/><circle cx="855.8" cy="385.7" r="3.25" fill="#ff7f0e" fill-opacity=".24" stroke="#ff7f0e" stroke-opacity=".36"/><circle cx="859.5" cy="381.1" r="3.25" fill="#ff7f0e" fill-opacity=".24" stroke="#ff7f0e" stroke-opacity=".36"/><circle cx="860.8" cy="383.1" r="3.25" fill="#ff7f0e" fill-opacity=".24" stroke="#ff7f0e" stroke-opacity=".36"/><circle cx="863.4" cy="384.8" r="3.25" fill="#ff7f0e" fill-opacity=".24" stroke="#ff7f0e" stroke-opacity=".36"/><circle cx="865.1" cy="386.5" r="3.25" fill="#ff7f0e" fill-opacity=".24" stroke="#ff7f0e" stroke-opacity=".36"/><circle cx="861.7" cy="389.1" r="3.25" fill="#ff7f0e" fill-opacity=".24" stroke="#ff7f0e" stroke-opacity=".36"/><circle cx="860.0" cy="392.5" r="3.25" fill="#ff7f0e" fill-opacity=".24" stroke="#ff7f0e" stroke-opacity=".36"/><circle cx="862.5" cy="394.5" r="3.25" fill="#ff7f0e" fill-opacity=".24" stroke="#ff7f0e" stroke-opacity=".36"/><circle cx="865.1" cy="391.6" r="3.25" fill="#ff7f0e" fill-opacity=".24" stroke="#ff7f0e" stroke-opacity=".36"/><circle cx="867.6" cy="388.7" r="3.25" fill="#ff7f0e" fill-opacity=".24" stroke="#ff7f0e" stroke-opacity=".36"/><circle cx="869.3" cy="386.5" r="3.25" fill="#ff7f0e" fill-opacity=".24" stroke="#ff7f0e" stroke-opacity=".36"/><circle cx="865.9" cy="399.2" r="3.25" fill="#ff7f0e" fill-opacity=".24" stroke="#ff7f0e" stroke-opacity=".36"/><circle cx="868.5" cy="400.1" r="3.25" fill="#ff7f0e" fill-opacity=".24" stroke="#ff7f0e" stroke-opacity=".36"/><circle cx="864.2" cy="400.9" r="3.25" fill="#ff7f0e" fill-opacity=".24" stroke="#ff7f0e" stroke-opacity=".36"/><circle cx="866.8" cy="401.8" r="3.25" fill="#ff7f0e" fill-opacity=".24" stroke="#ff7f0e" stroke-opacity=".36"/><circle cx="870.7" cy="379.2" r="3.25" fill="#ff7f0e" fill-opacity=".24" stroke="#ff7f0e" stroke-opacity=".36"/><circle cx="874.4" cy="380.6" r="3.25" fill="#ff7f0e" fill-opacity=".24" stroke="#ff7f0e" stroke-opacity=".36"/><circle cx="875.3" cy="383.1" r="3.25" fill="#ff7f0e" fill-opacity=".24" stroke="#ff7f0e" stroke-opacity=".36"/><circle cx="873.6" cy="386.5" r="3.25" fill="#ff7f0e" fill-opacity=".24" stroke="#ff7f0e" stroke-opacity=".36"/><circle cx="877.0" cy="390.8" r="3.25" fill="#ff7f0e" fill-opacity=".24" stroke="#ff7f0e" stroke-opacity=".36"/><circle cx="875.8" cy="398.1" r="3.25" fill="#ff7f0e" fill-opacity=".24" stroke="#ff7f0e" stroke-opacity=".36"/><circle cx="871.0" cy="392.5" r="3.25" fill="#ff7f0e" fill-opacity=".24" stroke="#ff7f0e" stroke-opacity=".36"/><circle cx="882.9" cy="380.6" r="3.25" fill="#ff7f0e" fill-opacity=".24" stroke="#ff7f0e" stroke-opacity=".36"/><circle cx="882.1" cy="385.7" r="3.25" fill="#ff7f0e" fill-opacity=".24" stroke="#ff7f0e" stroke-opacity=".36"/><circle cx="883.3" cy="390.4" r="3.25" fill="#ff7f0e" fill-opacity=".24" stroke="#ff7f0e" stroke-opacity=".36"/><circle cx="885.8" cy="392.5" r="3.25" fill="#ff7f0e" fill-opacity=".24" stroke="#ff7f0e" stroke-opacity=".36"/><circle cx="878.7" cy="372.9" r="3.25" fill="#ff7f0e" fill-opacity=".24" stroke="#ff7f0e" stroke-opacity=".36"/><circle cx="881.2" cy="370.7" r="3.25" fill="#ff7f0e" fill-opacity=".24" stroke="#ff7f0e" stroke-opacity=".36"/><circle cx="884.3" cy="369.0" r="3.25" fill="#ff7f0e" fill-opacity=".24" stroke="#ff7f0e" stroke-opacity=".36"/><circle cx="887.2" cy="369.5" r="3.25" fill="#ff7f0e" fill-opacity=".24" stroke="#ff7f0e" stroke-opacity=".36"/><circle cx="891.8" cy="370.4" r="3.25" fill="#ff7f0e" fill-opacity=".24" stroke="#ff7f0e" stroke-opacity=".36"/><circle cx="888.0" cy="357.6" r="3.25" fill="#ff7f0e" fill-opacity=".24" stroke="#ff7f0e" stroke-opacity=".36"/><circle cx="894.5" cy="352.5" r="3.25" fill="#ff7f0e" fill-opacity=".24" stroke="#ff7f0e" stroke-opacity=".36"/><circle cx="955.6" cy="303.1" r="3.25" fill="#ff7f0e" fill-opacity=".24" stroke="#ff7f0e" stroke-opacity=".36"/><circle cx="934.4" cy="323.3" r="3.25" fill="#ff7f0e" fill-opacity=".24" stroke="#ff7f0e" stroke-opacity=".36"/><circle cx="947.3" cy="326.2" r="3.25" fill="#ff7f0e" fill-opacity=".24" stroke="#ff7f0e" stroke-opacity=".36"/><circle cx="952.9" cy="326.2" r="3.25" fill="#ff7f0e" fill-opacity=".24" stroke="#ff7f0e" stroke-opacity=".36"/><circle cx="975.1" cy="330.4" r="3.25" fill="#ff7f0e" fill-opacity=".24" stroke="#ff7f0e" stroke-opacity=".36"/><circle cx="978.5" cy="339.2" r="3.25" fill="#ff7f0e" fill-opacity=".24" stroke="#ff7f0e" stroke-opacity=".36"/><circle cx="963.8" cy="334.5" r="3.25" fill="#ff7f0e" fill-opacity=".24" stroke="#ff7f0e" stroke-opacity=".36"/><circle cx="961.2" cy="336.7" r="3.25" fill="#ff7f0e" fill-opacity=".24" stroke="#ff7f0e" stroke-opacity=".36"/><circle cx="957.0" cy="338.4" r="3.25" fill="#ff7f0e" fill-opacity=".24" stroke="#ff7f0e" stroke-opacity=".36"/><circle cx="953.6" cy="337.2" r="3.25" fill="#ff7f0e" fill-opacity=".24" stroke="#ff7f0e" stroke-opacity=".36"/><circle cx="949.7" cy="337.2" r="3.25" fill="#ff7f0e" fill-opacity=".24" stroke="#ff7f0e" stroke-opacity=".36"/><circle cx="945.6" cy="339.6" r="3.25" fill="#ff7f0e" fill-opacity=".24" stroke="#ff7f0e" stroke-opacity=".36"/><circle cx="944.2" cy="343.5" r="3.25" fill="#ff7f0e" fill-opacity=".24" stroke="#ff7f0e" stroke-opacity=".36"/><circle cx="948.0" cy="341.8" r="3.25" fill="#ff7f0e" fill-opacity=".24" stroke="#ff7f0e" stroke-opacity=".36"/><circle cx="966.3" cy="343.0" r="3.25" fill="#ff7f0e" fill-opacity=".24" stroke="#ff7f0e" stroke-opacity=".36"/><circle cx="963.8" cy="345.7" r="3.25" fill="#ff7f0e" fill-opacity=".24" stroke="#ff7f0e" stroke-opacity=".36"/><circle cx="960.9" cy="350.3" r="3.25" fill="#ff7f0e" fill-opacity=".24" stroke="#ff7f0e" stroke-opacity=".36"/><circle cx="965.5" cy="351.1" r="3.25" fill="#ff7f0e" fill-opacity=".24" stroke="#ff7f0e" stroke-opacity=".36"/><circle cx="969.7" cy="348.6" r="3.25" fill="#ff7f0e" fill-opacity=".24" stroke="#ff7f0e" stroke-opacity=".36"/><circle cx="974.0" cy="347.7" r="3.25" fill="#ff7f0e" fill-opacity=".24" stroke="#ff7f0e" stroke-opacity=".36"/><circle cx="976.5" cy="352.0" r="3.25" fill="#ff7f0e" fill-opacity=".24" stroke="#ff7f0e" stroke-opacity=".36"/><circle cx="970.9" cy="357.9" r="3.25" fill="#ff7f0e" fill-opacity=".24" stroke="#ff7f0e" stroke-opacity=".36"/><circle cx="966.3" cy="359.3" r="3.25" fill="#ff7f0e" fill-opacity=".24" stroke="#ff7f0e" stroke-opacity=".36"/><circle cx="969.7" cy="363.9" r="3.25" fill="#ff7f0e" fill-opacity=".24" stroke="#ff7f0e" stroke-opacity=".36"/><circle cx="968.0" cy="366.4" r="3.25" fill="#ff7f0e" fill-opacity=".24" stroke="#ff7f0e" stroke-opacity=".36"/><circle cx="950.2" cy="349.1" r="3.25" fill="#ff7f0e" fill-opacity=".24" stroke="#ff7f0e" stroke-opacity=".36"/><circle cx="952.4" cy="352.5" r="3.25" fill="#ff7f0e" fill-opacity=".24" stroke="#ff7f0e" stroke-opacity=".36"/><circle cx="951.9" cy="355.4" r="3.25" fill="#ff7f0e" fill-opacity=".24" stroke="#ff7f0e" stroke-opacity=".36"/><circle cx="954.4" cy="357.9" r="3.25" fill="#ff7f0e" fill-opacity=".24" stroke="#ff7f0e" stroke-opacity=".36"/><circle cx="949.0" cy="359.6" r="3.25" fill="#ff7f0e" fill-opacity=".24" stroke="#ff7f0e" stroke-opacity=".36"/><circle cx="945.9" cy="360.5" r="3.25" fill="#ff7f0e" fill-opacity=".24" stroke="#ff7f0e" stroke-opacity=".36"/><circle cx="942.5" cy="350.3" r="3.25" fill="#ff7f0e" fill-opacity=".24" stroke="#ff7f0e" stroke-opacity=".36"/><circle cx="943.4" cy="353.7" r="3.25" fill="#ff7f0e" fill-opacity=".24" stroke="#ff7f0e" stroke-opacity=".36"/><circle cx="940.0" cy="359.6" r="3.25" fill="#ff7f0e" fill-opacity=".24" stroke="#ff7f0e" stroke-opacity=".36"/><circle cx="934.4" cy="349.1" r="3.25" fill="#ff7f0e" fill-opacity=".24" stroke="#ff7f0e" stroke-opacity=".36"/><circle cx="929.3" cy="349.1" r="3.25" fill="#ff7f0e" fill-opacity=".24" stroke="#ff7f0e" stroke-opacity=".36"/><circle cx="931.5" cy="354.5" r="3.25" fill="#ff7f0e" fill-opacity=".24" stroke="#ff7f0e" stroke-opacity=".36"/><circle cx="935.8" cy="356.2" r="3.25" fill="#ff7f0e" fill-opacity=".24" stroke="#ff7f0e" stroke-opacity=".36"/><circle cx="925.2" cy="357.9" r="3.25" fill="#ff7f0e" fill-opacity=".24" stroke="#ff7f0e" stroke-opacity=".36"/><circle cx="917.1" cy="354.9" r="3.25" fill="#ff7f0e" fill-opacity=".24" stroke="#ff7f0e" stroke-opacity=".36"/><circle cx="916.2" cy="357.9" r="3.25" fill="#ff7f0e" fill-opacity=".24" stroke="#ff7f0e" stroke-opacity=".36"/><circle cx="912.3" cy="362.2" r="3.25" fill="#ff7f0e" fill-opacity=".24" stroke="#ff7f0e" stroke-opacity=".36"/><circle cx="921.3" cy="362.2" r="3.25" fill="#ff7f0e" fill-opacity=".24" stroke="#ff7f0e" stroke-opacity=".36"/><circle cx="905.5" cy="350.3" r="3.25" fill="#ff7f0e" fill-opacity=".24" stroke="#ff7f0e" stroke-opacity=".36"/><circle cx="901.8" cy="352.0" r="3.25" fill="#ff7f0e" fill-opacity=".24" stroke="#ff7f0e" stroke-opacity=".36"/><circle cx="902.6" cy="355.4" r="3.25" fill="#ff7f0e" fill-opacity=".24" stroke="#ff7f0e" stroke-opacity=".36"/><circle cx="895.8" cy="352.0" r="3.25" fill="#ff7f0e" fill-opacity=".24" stroke="#ff7f0e" stroke-opacity=".36"/><circle cx="904.3" cy="357.1" r="3.25" fill="#ff7f0e" fill-opacity=".24" stroke="#ff7f0e" stroke-opacity=".36"/><circle cx="900.1" cy="364.7" r="3.25" fill="#ff7f0e" fill-opacity=".24" stroke="#ff7f0e" stroke-opacity=".36"/><circle cx="903.5" cy="363.9" r="3.25" fill="#ff7f0e" fill-opacity=".24" stroke="#ff7f0e" stroke-opacity=".36"/><circle cx="905.2" cy="369.0" r="3.25" fill="#ff7f0e" fill-opacity=".24" stroke="#ff7f0e" stroke-opacity=".36"/><circle cx="897.5" cy="368.1" r="3.25" fill="#ff7f0e" fill-opacity=".24" stroke="#ff7f0e" stroke-opacity=".36"/><circle cx="900.9" cy="374.1" r="3.25" fill="#ff7f0e" fill-opacity=".24" stroke="#ff7f0e" stroke-opacity=".36"/><circle cx="895.8" cy="374.9" r="3.25" fill="#ff7f0e" fill-opacity=".24" stroke="#ff7f0e" stroke-opacity=".36"/><circle cx="903.5" cy="379.1" r="3.25" fill="#ff7f0e" fill-opacity=".24" stroke="#ff7f0e" stroke-opacity=".36"/><circle cx="904.3" cy="383.4" r="3.25" fill="#ff7f0e" fill-opacity=".24" stroke="#ff7f0e" stroke-opacity=".36"/><circle cx="907.7" cy="385.4" r="3.25" fill="#ff7f0e" fill-opacity=".24" stroke="#ff7f0e" stroke-opacity=".36"/><circle cx="902.6" cy="388.5" r="3.25" fill="#ff7f0e" fill-opacity=".24" stroke="#ff7f0e" stroke-opacity=".36"/><circle cx="926.4" cy="368.1" r="3.25" fill="#ff7f0e" fill-opacity=".24" stroke="#ff7f0e" stroke-opacity=".36"/><circle cx="931.5" cy="365.6" r="3.25" fill="#ff7f0e" fill-opacity=".24" stroke="#ff7f0e" stroke-opacity=".36"/><circle cx="934.9" cy="367.3" r="3.25" fill="#ff7f0e" fill-opacity=".24" stroke="#ff7f0e" stroke-opacity=".36"/><circle cx="935.8" cy="370.7" r="3.25" fill="#ff7f0e" fill-opacity=".24" stroke="#ff7f0e" stroke-opacity=".36"/><circle cx="929.8" cy="374.9" r="3.25" fill="#ff7f0e" fill-opacity=".24" stroke="#ff7f0e" stroke-opacity=".36"/><circle cx="920.8" cy="376.6" r="3.25" fill="#ff7f0e" fill-opacity=".24" stroke="#ff7f0e" stroke-opacity=".36"/><circle cx="922.2" cy="386.8" r="3.25" fill="#ff7f0e" fill-opacity=".24" stroke="#ff7f0e" stroke-opacity=".36"/><circle cx="934.4" cy="403.8" r="3.25" fill="#ff7f0e" fill-opacity=".24" stroke="#ff7f0e" stroke-opacity=".36"/><circle cx="909.9" cy="408.9" r="3.25" fill="#ff7f0e" fill-opacity=".24" stroke="#ff7f0e" stroke-opacity=".36"/><circle cx="942.5" cy="364.7" r="3.25" fill="#ff7f0e" fill-opacity=".24" stroke="#ff7f0e" stroke-opacity=".36"/><circle cx="943.4" cy="368.1" r="3.25" fill="#ff7f0e" fill-opacity=".24" stroke="#ff7f0e" stroke-opacity=".36"/><circle cx="945.9" cy="370.7" r="3.25" fill="#ff7f0e" fill-opacity=".24" stroke="#ff7f0e" stroke-opacity=".36"/><circle cx="947.6" cy="372.4" r="3.25" fill="#ff7f0e" fill-opacity=".24" stroke="#ff7f0e" stroke-opacity=".36"/><circle cx="941.7" cy="376.6" r="3.25" fill="#ff7f0e" fill-opacity=".24" stroke="#ff7f0e" stroke-opacity=".36"/><circle cx="944.8" cy="379.7" r="3.25" fill="#ff7f0e" fill-opacity=".24" stroke="#ff7f0e" stroke-opacity=".36"/><circle cx="954.4" cy="364.7" r="3.25" fill="#ff7f0e" fill-opacity=".24" stroke="#ff7f0e" stroke-opacity=".36"/><circle cx="957.8" cy="367.3" r="3.25" fill="#ff7f0e" fill-opacity=".24" stroke="#ff7f0e" stroke-opacity=".36"/><circle cx="959.5" cy="370.7" r="3.25" fill="#ff7f0e" fill-opacity=".24" stroke="#ff7f0e" stroke-opacity=".36"/><circle cx="961.2" cy="372.4" r="3.25" fill="#ff7f0e" fill-opacity=".24" stroke="#ff7f0e" stroke-opacity=".36"/><circle cx="958.2" cy="374.1" r="3.25" fill="#ff7f0e" fill-opacity=".24" stroke="#ff7f0e" stroke-opacity=".36"/><circle cx="1038.6" cy="298.9" r="3.25" fill="#ff7f0e" fill-opacity=".24" stroke="#ff7f0e" stroke-opacity=".36"/><circle cx="1046.6" cy="298.9" r="3.25" fill="#ff7f0e" fill-opacity=".24" stroke="#ff7f0e" stroke-opacity=".36"/><circle cx="1056.8" cy="304.3" r="3.25" fill="#ff7f0e" fill-opacity=".24" stroke="#ff7f0e" stroke-opacity=".36"/><circle cx="1056.1" cy="309.1" r="3.25" fill="#ff7f0e" fill-opacity=".24" stroke="#ff7f0e" stroke-opacity=".36"/><circle cx="1054.7" cy="314.2" r="3.25" fill="#ff7f0e" fill-opacity=".24" stroke="#ff7f0e" stroke-opacity=".36"/><circle cx="1056.8" cy="317.1" r="3.25" fill="#ff7f0e" fill-opacity=".24" stroke="#ff7f0e" stroke-opacity=".36"/><circle cx="1056.4" cy="320.5" r="3.25" fill="#ff7f0e" fill-opacity=".24" stroke="#ff7f0e" stroke-opacity=".36"/><circle cx="1053.0" cy="326.4" r="3.25" fill="#ff7f0e" fill-opacity=".24" stroke="#ff7f0e" stroke-opacity=".36"/><circle cx="1050.5" cy="321.7" r="3.25" fill="#ff7f0e" fill-opacity=".24" stroke="#ff7f0e" stroke-opacity=".36"/><circle cx="1047.1" cy="327.3" r="3.25" fill="#ff7f0e" fill-opacity=".24" stroke="#ff7f0e" stroke-opacity=".36"/><circle cx="1044.5" cy="328.1" r="3.25" fill="#ff7f0e" fill-opacity=".24" stroke="#ff7f0e" stroke-opacity=".36"/><circle cx="1041.5" cy="323.0" r="3.25" fill="#ff7f0e" fill-opacity=".24" stroke="#ff7f0e" stroke-opacity=".36"/><circle cx="1041.5" cy="329.0" r="3.25" fill="#ff7f0e" fill-opacity=".24" stroke="#ff7f0e" stroke-opacity=".36"/><circle cx="1044.2" cy="312.0" r="3.25" fill="#ff7f0e" fill-opacity=".24" stroke="#ff7f0e" stroke-opacity=".36"/><circle cx="1042.5" cy="314.5" r="3.25" fill="#ff7f0e" fill-opacity=".24" stroke="#ff7f0e" stroke-opacity=".36"/><circle cx="1038.1" cy="314.5" r="3.25" fill="#ff7f0e" fill-opacity=".24" stroke="#ff7f0e" stroke-opacity=".36"/><circle cx="1028.9" cy="307.4" r="3.25" fill="#ff7f0e" fill-opacity=".24" stroke="#ff7f0e" stroke-opacity=".36"/><circle cx="1022.1" cy="310.3" r="3.25" fill="#ff7f0e" fill-opacity=".24" stroke="#ff7f0e" stroke-opacity=".36"/><circle cx="1012.6" cy="311.6" r="3.25" fill="#ff7f0e" fill-opacity=".24" stroke="#ff7f0e" stroke-opacity=".36"/><circle cx="1017.0" cy="317.4" r="3.25" fill="#ff7f0e" fill-opacity=".24" stroke="#ff7f0e" stroke-opacity=".36"/><circle cx="1026.7" cy="320.5" r="3.25" fill="#ff7f0e" fill-opacity=".24" stroke="#ff7f0e" stroke-opacity=".36"/><circle cx="1032.3" cy="320.0" r="3.25" fill="#ff7f0e" fill-opacity=".24" stroke="#ff7f0e" stroke-opacity=".36"/><circle cx="1014.8" cy="323.4" r="3.25" fill="#ff7f0e" fill-opacity=".24" stroke="#ff7f0e" stroke-opacity=".36"/><circle cx="1020.8" cy="324.4" r="3.25" fill="#ff7f0e" fill-opacity=".24" stroke="#ff7f0e" stroke-opacity=".36"/><circle cx="1023.3" cy="328.5" r="3.25" fill="#ff7f0e" fill-opacity=".24" stroke="#ff7f0e" stroke-opacity=".36"/><circle cx="1028.4" cy="331.5" r="3.25" fill="#ff7f0e" fill-opacity=".24" stroke="#ff7f0e" stroke-opacity=".36"/><circle cx="1030.9" cy="328.5" r="3.25" fill="#ff7f0e" fill-opacity=".24" stroke="#ff7f0e" stroke-opacity=".36"/><circle cx="1035.2" cy="329.0" r="3.25" fill="#ff7f0e" fill-opacity=".24" stroke="#ff7f0e" stroke-opacity=".36"/><circle cx="1034.0" cy="333.2" r="3.25" fill="#ff7f0e" fill-opacity=".24" stroke="#ff7f0e" stroke-opacity=".36"/><circle cx="1019.9" cy="337.5" r="3.25" fill="#ff7f0e" fill-opacity=".24" stroke="#ff7f0e" stroke-opacity=".36"/><circle cx="1014.8" cy="343.4" r="3.25" fill="#ff7f0e" fill-opacity=".24" stroke="#ff7f0e" stroke-opacity=".36"/><circle cx="1023.3" cy="343.7" r="3.25" fill="#ff7f0e" fill-opacity=".24" stroke="#ff7f0e" stroke-opacity=".36"/><circle cx="1024.2" cy="345.4" r="3.25" fill="#ff7f0e" fill-opacity=".24" stroke="#ff7f0e" stroke-opacity=".36"/><circle cx="1040.6" cy="340.5" r="3.25" fill="#ff7f0e" fill-opacity=".24" stroke="#ff7f0e" stroke-opacity=".36"/><circle cx="997.8" cy="314.5" r="3.25" fill="#ff7f0e" fill-opacity=".24" stroke="#ff7f0e" stroke-opacity=".36"/><circle cx="994.4" cy="317.1" r="3.25" fill="#ff7f0e" fill-opacity=".24" stroke="#ff7f0e" stroke-opacity=".36"/><circle cx="992.2" cy="319.6" r="3.25" fill="#ff7f0e" fill-opacity=".24" stroke="#ff7f0e" stroke-opacity=".36"/><circle cx="991.5" cy="324.4" r="3.25" fill="#ff7f0e" fill-opacity=".24" stroke="#ff7f0e" stroke-opacity=".36"/><circle cx="998.7" cy="318.8" r="3.25" fill="#ff7f0e" fill-opacity=".24" stroke="#ff7f0e" stroke-opacity=".36"/><circle cx="1005.5" cy="317.4" r="3.25" fill="#ff7f0e" fill-opacity=".24" stroke="#ff7f0e" stroke-opacity=".36"/><circle cx="1006.3" cy="320.5" r="3.25" fill="#ff7f0e" fill-opacity=".24" stroke="#ff7f0e" stroke-opacity=".36"/><circle cx="1009.7" cy="320.0" r="3.25" fill="#ff7f0e" fill-opacity=".24" stroke="#ff7f0e" stroke-opacity=".36"/><circle cx="1006.3" cy="324.7" r="3.25" fill="#ff7f0e" fill-opacity=".24" stroke="#ff7f0e" stroke-opacity=".36"/><circle cx="1005.1" cy="328.5" r="3.25" fill="#ff7f0e" fill-opacity=".24" stroke="#ff7f0e" stroke-opacity=".36"/><circle cx="1005.8" cy="332.4" r="3.25" fill="#ff7f0e" fill-opacity=".24" stroke="#ff7f0e" stroke-opacity=".36"/><circle cx="1000.0" cy="336.3" r="3.25" fill="#ff7f0e" fill-opacity=".24" stroke="#ff7f0e" stroke-opacity=".36"/><circle cx="995.6" cy="330.1" r="3.25" fill="#ff7f0e" fill-opacity=".24" stroke="#ff7f0e" stroke-opacity=".36"/><circle cx="993.6" cy="334.1" r="3.25" fill="#ff7f0e" fill-opacity=".24" stroke="#ff7f0e" stroke-opacity=".36"/><circle cx="989.3" cy="330.7" r="3.25" fill="#ff7f0e" fill-opacity=".24" stroke="#ff7f0e" stroke-opacity=".36"/><circle cx="983.7" cy="327.3" r="3.25" fill="#ff7f0e" fill-opacity=".24" stroke="#ff7f0e" stroke-opacity=".36"/><circle cx="981.7" cy="329.8" r="3.25" fill="#ff7f0e" fill-opacity=".24" stroke="#ff7f0e" stroke-opacity=".36"/><circle cx="987.1" cy="336.6" r="3.25" fill="#ff7f0e" fill-opacity=".24" stroke="#ff7f0e" stroke-opacity=".36"/><circle cx="989.3" cy="341.7" r="3.25" fill="#ff7f0e" fill-opacity=".24" stroke="#ff7f0e" stroke-opacity=".36"/><circle cx="984.8" cy="345.9" r="3.25" fill="#ff7f0e" fill-opacity=".24" stroke="#ff7f0e" stroke-opacity=".36"/><circle cx="992.7" cy="347.6" r="3.25" fill="#ff7f0e" fill-opacity=".24" stroke="#ff7f0e" stroke-opacity=".36"/><circle cx="980.0" cy="339.1" r="3.25" fill="#ff7f0e" fill-opacity=".24" stroke="#ff7f0e" stroke-opacity=".36"/><circle cx="985.6" cy="353.6" r="3.25" fill="#ff7f0e" fill-opacity=".24" stroke="#ff7f0e" stroke-opacity=".36"/><circle cx="980.8" cy="354.4" r="3.25" fill="#ff7f0e" fill-opacity=".24" stroke="#ff7f0e" stroke-opacity=".36"/><circle cx="1120.3" cy="232.5" r="3.25" fill="#ff7f0e" fill-opacity=".24" stroke="#ff7f0e" stroke-opacity=".36"/><circle cx="1123.7" cy="239.7" r="3.25" fill="#ff7f0e" fill-opacity=".24" stroke="#ff7f0e" stroke-opacity=".36"/><circle cx="1141.5" cy="239.7" r="3.25" fill="#ff7f0e" fill-opacity=".24" stroke="#ff7f0e" stroke-opacity=".36"/><circle cx="1141.0" cy="254.3" r="3.25" fill="#ff7f0e" fill-opacity=".24" stroke="#ff7f0e" stroke-opacity=".36"/><circle cx="1111.8" cy="245.3" r="3.25" fill="#ff7f0e" fill-opacity=".24" stroke="#ff7f0e" stroke-opacity=".36"/><circle cx="1105.0" cy="251.2" r="3.25" fill="#ff7f0e" fill-opacity=".24" stroke="#ff7f0e" stroke-opacity=".36"/><circle cx="1118.2" cy="253.8" r="3.25" fill="#ff7f0e" fill-opacity=".24" stroke="#ff7f0e" stroke-opacity=".36"/><circle cx="1113.5" cy="255.1" r="3.25" fill="#ff7f0e" fill-opacity=".24" stroke="#ff7f0e" stroke-opacity=".36"/><circle cx="1122.8" cy="256.8" r="3.25" fill="#ff7f0e" fill-opacity=".24" stroke="#ff7f0e" stroke-opacity=".36"/><circle cx="1112.3" cy="260.2" r="3.25" fill="#ff7f0e" fill-opacity=".24" stroke="#ff7f0e" stroke-opacity=".36"/><circle cx="1116.9" cy="259.7" r="3.25" fill="#ff7f0e" fill-opacity=".24" stroke="#ff7f0e" stroke-opacity=".36"/><circle cx="1116.0" cy="263.1" r="3.25" fill="#ff7f0e" fill-opacity=".24" stroke="#ff7f0e" stroke-opacity=".36"/><circle cx="1123.7" cy="263.1" r="3.25" fill="#ff7f0e" fill-opacity=".24" stroke="#ff7f0e" stroke-opacity=".36"/><circle cx="1098.4" cy="261.1" r="3.25" fill="#ff7f0e" fill-opacity=".24" stroke="#ff7f0e" stroke-opacity=".36"/><circle cx="1099.4" cy="266.5" r="3.25" fill="#ff7f0e" fill-opacity=".24" stroke="#ff7f0e" stroke-opacity=".36"/><circle cx="1100.4" cy="269.9" r="3.25" fill="#ff7f0e" fill-opacity=".24" stroke="#ff7f0e" stroke-opacity=".36"/><circle cx="1113.0" cy="271.3" r="3.25" fill="#ff7f0e" fill-opacity=".24" stroke="#ff7f0e" stroke-opacity=".36"/><circle cx="1091.4" cy="274.2" r="3.25" fill="#ff7f0e" fill-opacity=".24" stroke="#ff7f0e" stroke-opacity=".36"/><circle cx="1096.0" cy="274.5" r="3.25" fill="#ff7f0e" fill-opacity=".24" stroke="#ff7f0e" stroke-opacity=".36"/><circle cx="1102.1" cy="278.4" r="3.25" fill="#ff7f0e" fill-opacity=".24" stroke="#ff7f0e" stroke-opacity=".36"/><circle cx="1090.9" cy="279.2" r="3.25" fill="#ff7f0e" fill-opacity=".24" stroke="#ff7f0e" stroke-opacity=".36"/><circle cx="1089.7" cy="281.3" r="3.25" fill="#ff7f0e" fill-opacity=".24" stroke="#ff7f0e" stroke-opacity=".36"/><circle cx="1097.4" cy="282.6" r="3.25" fill="#ff7f0e" fill-opacity=".24" stroke="#ff7f0e" stroke-opacity=".36"/><circle cx="1093.1" cy="285.7" r="3.25" fill="#ff7f0e" fill-opacity=".24" stroke="#ff7f0e" stroke-opacity=".36"/><circle cx="1105.0" cy="283.0" r="3.25" fill="#ff7f0e" fill-opacity=".24" stroke="#ff7f0e" stroke-opacity=".36"/><circle cx="1109.2" cy="280.9" r="3.25" fill="#ff7f0e" fill-opacity=".24" stroke="#ff7f0e" stroke-opacity=".36"/><circle cx="1109.6" cy="283.0" r="3.25" fill="#ff7f0e" fill-opacity=".24" stroke="#ff7f0e" stroke-opacity=".36"/><circle cx="1106.7" cy="288.9" r="3.25" fill="#ff7f0e" fill-opacity=".24" stroke="#ff7f0e" stroke-opacity=".36"/><circle cx="1098.2" cy="292.8" r="3.25" fill="#ff7f0e" fill-opacity=".24" stroke="#ff7f0e" stroke-opacity=".36"/><circle cx="1093.6" cy="295.9" r="3.25" fill="#ff7f0e" fill-opacity=".24" stroke="#ff7f0e" stroke-opacity=".36"/><circle cx="1080.7" cy="286.9" r="3.25" fill="#ff7f0e" fill-opacity=".24" stroke="#ff7f0e" stroke-opacity=".36"/><circle cx="1085.1" cy="287.7" r="3.25" fill="#ff7f0e" fill-opacity=".24" stroke="#ff7f0e" stroke-opacity=".36"/><circle cx="1082.9" cy="290.3" r="3.25" fill="#ff7f0e" fill-opacity=".24" stroke="#ff7f0e" stroke-opacity=".36"/><circle cx="1081.2" cy="293.7" r="3.25" fill="#ff7f0e" fill-opacity=".24" stroke="#ff7f0e" stroke-opacity=".36"/><circle cx="1077.0" cy="294.2" r="3.25" fill="#ff7f0e" fill-opacity=".24" stroke="#ff7f0e" stroke-opacity=".36"/><circle cx="1075.3" cy="294.5" r="3.25" fill="#ff7f0e" fill-opacity=".24" stroke="#ff7f0e" stroke-opacity=".36"/><circle cx="1065.1" cy="294.2" r="3.25" fill="#ff7f0e" fill-opacity=".24" stroke="#ff7f0e" stroke-opacity=".36"/><circle cx="1064.2" cy="296.2" r="3.25" fill="#ff7f0e" fill-opacity=".24" stroke="#ff7f0e" stroke-opacity=".36"/><circle cx="1065.9" cy="299.6" r="3.25" fill="#ff7f0e" fill-opacity=".24" stroke="#ff7f0e" stroke-opacity=".36"/><circle cx="1072.2" cy="298.8" r="3.25" fill="#ff7f0e" fill-opacity=".24" stroke="#ff7f0e" stroke-opacity=".36"/><circle cx="1078.2" cy="300.0" r="3.25" fill="#ff7f0e" fill-opacity=".24" stroke="#ff7f0e" stroke-opacity=".36"/><circle cx="1068.5" cy="302.2" r="3.25" fill="#ff7f0e" fill-opacity=".24" stroke="#ff7f0e" stroke-opacity=".36"/><circle cx="1070.2" cy="304.4" r="3.25" fill="#ff7f0e" fill-opacity=".24" stroke="#ff7f0e" stroke-opacity=".36"/><circle cx="1071.0" cy="306.8" r="3.25" fill="#ff7f0e" fill-opacity=".24" stroke="#ff7f0e" stroke-opacity=".36"/><circle cx="1079.2" cy="307.3" r="3.25" fill="#ff7f0e" fill-opacity=".24" stroke="#ff7f0e" stroke-opacity=".36"/><circle cx="1065.6" cy="313.2" r="3.25" fill="#ff7f0e" fill-opacity=".24" stroke="#ff7f0e" stroke-opacity=".36"/><circle cx="1082.1" cy="313.2" r="3.25" fill="#ff7f0e" fill-opacity=".24" stroke="#ff7f0e" stroke-opacity=".36"/><circle cx="1139.3" cy="177.8" r="3.25" fill="#ff7f0e" fill-opacity=".24" stroke="#ff7f0e" stroke-opacity=".36"/><circle cx="1135.4" cy="206.4" r="3.25" fill="#ff7f0e" fill-opacity=".24" stroke="#ff7f0e" stroke-opacity=".36"/><circle cx="1139.6" cy="208.1" r="3.25" fill="#ff7f0e" fill-opacity=".24" stroke="#ff7f0e" stroke-opacity=".36"/><circle cx="1132.8" cy="221.1" r="3.25" fill="#ff7f0e" fill-opacity=".24" stroke="#ff7f0e" stroke-opacity=".36"/><circle cx="1139.6" cy="225.4" r="3.25" fill="#ff7f0e" fill-opacity=".24" stroke="#ff7f0e" stroke-opacity=".36"/><circle cx="1124.7" cy="228.3" r="3.25" fill="#ff7f0e" fill-opacity=".24" stroke="#ff7f0e" stroke-opacity=".36"/><circle cx="857.1" cy="395.8" r="3.25" fill="#ff7f0e" fill-opacity=".24" stroke="#ff7f0e" stroke-opacity=".36"/><circle cx="870.9" cy="381.0" r="3.25" fill="#ff7f0e" fill-opacity=".24" stroke="#ff7f0e" stroke-opacity=".36"/><circle cx="855.3" cy="395.0" r="3.25" fill="#ff7f0e" fill-opacity=".24" stroke="#ff7f0e" stroke-opacity=".36"/><circle cx="871.1" cy="388.9" r="3.25" fill="#ff7f0e" fill-opacity=".24" stroke="#ff7f0e" stroke-opacity=".36"/><circle cx="853.1" cy="390.4" r="3.25" fill="#ff7f0e" fill-opacity=".24" stroke="#ff7f0e" stroke-opacity=".36"/><circle cx="871.2" cy="385.7" r="3.25" fill="#ff7f0e" fill-opacity=".24" stroke="#ff7f0e" stroke-opacity=".36"/><circle cx="878.4" cy="382.9" r="3.25" fill="#ff7f0e" fill-opacity=".24" stroke="#ff7f0e" stroke-opacity=".36"/><circle cx="863.6" cy="387.7" r="3.25" fill="#ff7f0e" fill-opacity=".24" stroke="#ff7f0e" stroke-opacity=".36"/><circle cx="882.8" cy="373.2" r="3.25" fill="#ff7f0e" fill-opacity=".24" stroke="#ff7f0e" stroke-opacity=".36"/><circle cx="856.6" cy="388.6" r="3.25" fill="#ff7f0e" fill-opacity=".24" stroke="#ff7f0e" stroke-opacity=".36"/><circle cx="866.0" cy="387.9" r="3.25" fill="#ff7f0e" fill-opacity=".24" stroke="#ff7f0e" stroke-opacity=".36"/><circle cx="862.4" cy="389.7" r="3.25" fill="#ff7f0e" fill-opacity=".24" stroke="#ff7f0e" stroke-opacity=".36"/><circle cx="940.0" cy="364.4" r="3.25" fill="#ff7f0e" fill-opacity=".24" stroke="#ff7f0e" stroke-opacity=".36"/><circle cx="943.9" cy="359.9" r="3.25" fill="#ff7f0e" fill-opacity=".24" stroke="#ff7f0e" stroke-opacity=".36"/><circle cx="927.8" cy="371.7" r="3.25" fill="#ff7f0e" fill-opacity=".24" stroke="#ff7f0e" stroke-opacity=".36"/><circle cx="928.2" cy="367.4" r="3.25" fill="#ff7f0e" fill-opacity=".24" stroke="#ff7f0e" stroke-opacity=".36"/><circle cx="928.2" cy="368.2" r="3.25" fill="#ff7f0e" fill-opacity=".24" stroke="#ff7f0e" stroke-opacity=".36"/><circle cx="932.8" cy="366.5" r="3.25" fill="#ff7f0e" fill-opacity=".24" stroke="#ff7f0e" stroke-opacity=".36"/><circle cx="956.5" cy="351.3" r="3.25" fill="#ff7f0e" fill-opacity=".24" stroke="#ff7f0e" stroke-opacity=".36"/><circle cx="939.4" cy="355.6" r="3.25" fill="#ff7f0e" fill-opacity=".24" stroke="#ff7f0e" stroke-opacity=".36"/><circle cx="936.6" cy="366.3" r="3.25" fill="#ff7f0e" fill-opacity=".24" stroke="#ff7f0e" stroke-opacity=".36"/><circle cx="937.2" cy="364.6" r="3.25" fill="#ff7f0e" fill-opacity=".24" stroke="#ff7f0e" stroke-opacity=".36"/></svg>
<span class="t" style="left:707.02px;top:457.35px;font:13.89px/13.89px 'DejaVu Sans',sans-serif;color:#f0f1f2;transform:scaleX(1.0000);">25</span>
<span class="t" style="left:707.02px;top:421.28px;font:13.89px/13.89px 'DejaVu Sans',sans-serif;color:#f0f1f2;transform:scaleX(1.0000);">50</span>
<span class="t" style="left:707.02px;top:385.21px;font:13.89px/13.89px 'DejaVu Sans',sans-serif;color:#f0f1f2;transform:scaleX(1.0000);">75</span>
<span class="t" style="left:698.19px;top:349.14px;font:13.89px/13.89px 'DejaVu Sans',sans-serif;color:#f0f1f2;transform:scaleX(1.0000);">100</span>
<span class="t" style="left:698.19px;top:313.07px;font:13.89px/13.89px 'DejaVu Sans',sans-serif;color:#f0f1f2;transform:scaleX(1.0000);">125</span>
<span class="t" style="left:698.19px;top:277.00px;font:13.89px/13.89px 'DejaVu Sans',sans-serif;color:#f0f1f2;transform:scaleX(1.0000);">150</span>
<span class="t" style="left:698.19px;top:240.93px;font:13.89px/13.89px 'DejaVu Sans',sans-serif;color:#f0f1f2;transform:scaleX(1.0000);">175</span>
<span class="t" style="left:698.19px;top:204.86px;font:13.89px/13.89px 'DejaVu Sans',sans-serif;color:#f0f1f2;transform:scaleX(1.0000);">200</span>
<span class="t" style="left:698.19px;top:168.79px;font:13.89px/13.89px 'DejaVu Sans',sans-serif;color:#f0f1f2;transform:scaleX(1.0000);">225</span>
<span class="t" style="left:734.56px;top:475.75px;font:13.89px/13.89px 'DejaVu Sans',sans-serif;color:#f0f1f2;transform:scaleX(1.0000);">−2</span>
<span class="t" style="left:834.78px;top:475.75px;font:13.89px/13.89px 'DejaVu Sans',sans-serif;color:#f0f1f2;transform:scaleX(1.0000);">0</span>
<span class="t" style="left:929.18px;top:475.75px;font:13.89px/13.89px 'DejaVu Sans',sans-serif;color:#f0f1f2;transform:scaleX(1.0000);">2</span>
<span class="t" style="left:1023.58px;top:475.75px;font:13.89px/13.89px 'DejaVu Sans',sans-serif;color:#f0f1f2;transform:scaleX(1.0000);">4</span>
<span class="t" style="left:1117.98px;top:475.75px;font:13.89px/13.89px 'DejaVu Sans',sans-serif;color:#f0f1f2;transform:scaleX(1.0000);">6</span>
<span class="t" style="left:920.30px;top:494.85px;font:13.89px/13.89px 'DejaVu Sans',sans-serif;color:#f0f1f2;transform:scaleX(0.9765);">UMAP_0</span>
<span class="t" style="left:669.51px;top:309.10px;font:13.89px/13.89px 'DejaVu Sans',sans-serif;color:#f0f1f2;transform-origin:50% 50%;transform:rotate(-90deg)">area</span>
<span class="t" style="left:669.00px;top:517.64px;font:bold 12px/12px 'Liberation Sans',sans-serif;color:#f0f1f2;transform:scaleX(0.9741);">Plotting</span>
<span class="t" style="left:668.00px;top:543.24px;font:12px/12px 'Liberation Sans',sans-serif;color:#f0f1f2;transform:scaleX(0.8809);">Labels layer</span>
<span class="t" style="left:668.40px;top:570.94px;font:12px/12px 'Liberation Sans',sans-serif;color:#f0f1f2;transform:scaleX(0.8846);">Axes</span>
<span class="t" style="left:668.00px;top:598.64px;font:12px/12px 'Liberation Sans',sans-serif;color:#f0f1f2;transform:scaleX(0.8977);">Clustering</span>
<div class="r" style="left:941px;top:537px;width:275px;height:22px;background:#414851;border-radius:2px;"></div>
<svg class="r" style="left:1197px;top:544px;" width="12" height="8" viewBox="0 0 12 8"><path d="M0 0H12L6 8Z" fill="#868e93"/></svg>
<span class="t" style="left:948.50px;top:542.64px;font:12px/12px 'Liberation Sans',sans-serif;color:#f0f1f2;transform:scaleX(0.8790);">StarDist labels</span>
<div class="r" style="left:840px;top:565px;width:184px;height:22px;background:#414851;border-radius:2px;"></div>
<svg class="r" style="left:1005px;top:572px;" width="12" height="8" viewBox="0 0 12 8"><path d="M0 0H12L6 8Z" fill="#868e93"/></svg>
<span class="t" style="left:847.50px;top:570.64px;font:12px/12px 'Liberation Sans',sans-serif;color:#f0f1f2;transform:scaleX(0.8226);">UMAP_0</span>
<div class="r" style="left:1028px;top:559px;width:193px;height:33px;background:#22b14c;border-radius:0px;"></div>
<div class="r" style="left:1033px;top:564px;width:183px;height:23px;background:#414851;border-radius:0px;"></div>
<svg class="r" style="left:1197px;top:572px;" width="12" height="8" viewBox="0 0 12 8"><path d="M0 0H12L6 8Z" fill="#868e93"/></svg>
<span class="t" style="left:1038.50px;top:570.84px;font:12px/12px 'Liberation Sans',sans-serif;color:#f0f1f2;transform:scaleX(0.9118);">area</span>
<div class="r" style="left:941px;top:593px;width:275px;height:22px;background:#414851;border-radius:2px;"></div>
<svg class="r" style="left:1197px;top:600px;" width="12" height="8" viewBox="0 0 12 8"><path d="M0 0H12L6 8Z" fill="#868e93"/></svg>
<span class="t" style="left:948.50px;top:598.64px;font:12px/12px 'Liberation Sans',sans-serif;color:#f0f1f2;transform:scaleX(0.8221);">MANUAL_CLUSTER_ID</span>
<div class="r" style="left:665px;top:621px;width:551px;height:21px;background:#414851;border-radius:2px;"></div>
<span class="t" style="left:843.00px;top:625.84px;font:12px/12px 'Liberation Sans',sans-serif;color:#f0f1f2;transform:scaleX(0.8939);">Update Axes/Clustering Selection Boxes</span>
<div class="r" style="left:665px;top:648px;width:551px;height:21px;background:#414851;border-radius:2px;"></div>
<span class="t" style="left:930.00px;top:652.84px;font:12px/12px 'Liberation Sans',sans-serif;color:#f0f1f2;transform:scaleX(0.8858);">Run</span>
<svg class="r" style="left:895px;top:585px;" width="60" height="40" viewBox="0 0 60 40"><path d="M6.5 13H25V6L47.5 20.5L25 35V28H6.5Z" fill="#22b14c"/></svg>
<svg class="r" style="left:1035px;top:612px;" width="45" height="36" viewBox="0 0 45 36"><path d="M4 19L22 5.5V12H39.6V26H22V32Z" fill="#22b14c"/></svg>
<svg class="r" style="left:954px;top:640px;" width="40" height="36" viewBox="0 0 40 36"><path d="M4 18L21 5.5V11H36V25H21V30.4Z" fill="#22b14c"/></svg>
<span class="t" style="left:915.00px;top:688.62px;font:12.5px/12.5px 'Liberation Sans',sans-serif;color:#f0f1f2;transform:scaleX(0.9679);">enter paint or fill mode to edit labels</span>
<svg class="r" style="left:1144px;top:689px;" width="12" height="8" viewBox="0 0 12 8"><path d="M1 7L6 1.6L11 7Z" fill="#f0f1f2"/></svg>
<span class="t" style="left:1158.50px;top:688.62px;font:12.5px/12.5px 'Liberation Sans',sans-serif;color:#f0f1f2;transform:scaleX(0.9816);">activity</span>
<svg class="r" style="left:276px;top:77px;" width="360" height="591" viewBox="276 77 360 591"><rect x="333.3" y="249.9" width="245.8" height="244.8" fill="#0a0a0a"/><clipPath id="imc"><rect x="333.3" y="249.9" width="245.8" height="244.8"/></clipPath><g clip-path="url(#imc)"><ellipse cx="347.9" cy="251.2" rx="2.9" ry="1.4" fill="rgb(223,104,60)"/><ellipse cx="356.2" cy="252.2" rx="1.7" ry="2.8" fill="rgb(223,143,39)"/><ellipse cx="361.3" cy="257.3" rx="2.7" ry="2.5" fill="rgb(230,143,40)"/><ellipse cx="371.8" cy="254.7" rx="2.1" ry="2.7" fill="rgb(233,129,23)"/><ellipse cx="382.5" cy="258.5" rx="2.3" ry="2.5" fill="rgb(241,130,26)"/><ellipse cx="396.3" cy="260.8" rx="2.8" ry="2.7" fill="rgb(192,107,68)"/><ellipse cx="406.8" cy="262.1" rx="2.8" ry="2.9" fill="rgb(233,123,37)"/><ellipse cx="348.5" cy="263.4" rx="2.7" ry="2.7" fill="rgb(231,156,48)"/><ellipse cx="357.5" cy="265.8" rx="2.1" ry="2.0" fill="rgb(239,119,31)"/><ellipse cx="364.2" cy="266.8" rx="3.2" ry="3.0" fill="rgb(216,146,64)"/><ellipse cx="374.4" cy="265.5" rx="2.6" ry="2.3" fill="rgb(242,144,77)"/><ellipse cx="355.5" cy="272.3" rx="2.8" ry="2.9" fill="rgb(217,117,33)"/><ellipse cx="385.1" cy="272.8" rx="2.9" ry="3.0" fill="rgb(189,106,70)"/><ellipse cx="395.4" cy="274.8" rx="2.5" ry="1.5" fill="rgb(46,151,201)"/><ellipse cx="404.9" cy="273.8" rx="3.1" ry="2.8" fill="rgb(231,153,42)"/><ellipse cx="373.1" cy="276.4" rx="3.0" ry="2.9" fill="rgb(241,144,69)"/><ellipse cx="392.8" cy="278.9" rx="2.9" ry="3.0" fill="rgb(224,107,71)"/><ellipse cx="358.7" cy="284.0" rx="3.7" ry="3.7" fill="rgb(215,145,75)"/><ellipse cx="368.9" cy="290.4" rx="3.3" ry="3.0" fill="rgb(239,121,24)"/><ellipse cx="386.4" cy="291.0" rx="3.0" ry="3.1" fill="rgb(232,132,27)"/><ellipse cx="394.6" cy="291.0" rx="2.3" ry="1.7" fill="rgb(48,147,196)"/><ellipse cx="384.4" cy="295.8" rx="1.5" ry="1.0" fill="rgb(229,154,49)"/><ellipse cx="360.0" cy="299.9" rx="2.3" ry="2.4" fill="rgb(203,143,64)"/><ellipse cx="351.3" cy="304.4" rx="2.4" ry="2.2" fill="rgb(218,145,37)"/><ellipse cx="369.9" cy="302.8" rx="2.7" ry="2.5" fill="rgb(233,102,59)"/><ellipse cx="380.1" cy="302.1" rx="2.9" ry="2.0" fill="rgb(240,128,33)"/><ellipse cx="388.0" cy="304.6" rx="2.8" ry="3.7" fill="rgb(231,157,52)"/><ellipse cx="399.7" cy="301.4" rx="2.6" ry="1.9" fill="rgb(242,125,37)"/><ellipse cx="337.5" cy="309.2" rx="3.3" ry="1.0" fill="rgb(223,118,26)"/><ellipse cx="370.4" cy="310.5" rx="3.6" ry="2.3" fill="rgb(234,148,78)"/><ellipse cx="392.2" cy="313.9" rx="3.6" ry="2.0" fill="rgb(224,158,47)"/><ellipse cx="355.9" cy="323.5" rx="3.1" ry="3.2" fill="rgb(238,147,74)"/><ellipse cx="374.9" cy="321.9" rx="2.8" ry="2.8" fill="rgb(207,107,30)"/><ellipse cx="386.1" cy="320.9" rx="1.9" ry="2.9" fill="rgb(243,166,23)"/><ellipse cx="418.5" cy="258.9" rx="2.8" ry="2.7" fill="rgb(222,113,32)"/><ellipse cx="427.4" cy="263.9" rx="3.1" ry="3.2" fill="rgb(232,132,33)"/><ellipse cx="429.5" cy="271.5" rx="2.3" ry="2.4" fill="rgb(234,108,72)"/><ellipse cx="417.0" cy="275.4" rx="3.2" ry="3.1" fill="rgb(234,152,76)"/><ellipse cx="429.5" cy="279.9" rx="2.3" ry="2.0" fill="rgb(222,147,41)"/><ellipse cx="444.1" cy="283.8" rx="2.7" ry="2.9" fill="rgb(236,155,73)"/><ellipse cx="413.2" cy="290.1" rx="3.5" ry="3.1" fill="rgb(217,145,53)"/><ellipse cx="425.3" cy="301.8" rx="3.2" ry="2.5" fill="rgb(238,117,30)"/><ellipse cx="434.9" cy="304.8" rx="2.6" ry="2.5" fill="rgb(47,145,205)"/><ellipse cx="412.8" cy="305.9" rx="3.2" ry="3.4" fill="rgb(246,133,35)"/><ellipse cx="471.7" cy="305.3" rx="2.8" ry="2.7" fill="rgb(233,142,51)"/><ellipse cx="469.6" cy="309.2" rx="4.2" ry="2.2" fill="rgb(221,147,41)"/><ellipse cx="413.8" cy="317.4" rx="2.0" ry="1.8" fill="rgb(233,150,78)"/><ellipse cx="418.9" cy="318.1" rx="1.7" ry="1.7" fill="rgb(235,118,29)"/><ellipse cx="416.0" cy="322.8" rx="3.2" ry="3.3" fill="rgb(233,156,37)"/><ellipse cx="544.0" cy="254.7" rx="2.9" ry="2.9" fill="rgb(238,118,63)"/><ellipse cx="549.5" cy="251.9" rx="3.2" ry="2.1" fill="rgb(247,133,29)"/><ellipse cx="562.1" cy="253.2" rx="2.7" ry="2.7" fill="rgb(215,113,36)"/><ellipse cx="571.4" cy="254.7" rx="3.2" ry="3.0" fill="rgb(217,109,29)"/><ellipse cx="561.4" cy="258.5" rx="2.3" ry="1.5" fill="rgb(40,141,203)"/><ellipse cx="569.2" cy="263.0" rx="4.8" ry="2.2" fill="rgb(221,114,25)"/><ellipse cx="552.0" cy="267.1" rx="0.9" ry="2.5" fill="rgb(44,142,205)"/><ellipse cx="547.2" cy="268.7" rx="2.2" ry="2.1" fill="rgb(243,150,64)"/><ellipse cx="551.9" cy="273.8" rx="1.7" ry="1.8" fill="rgb(246,140,74)"/><ellipse cx="534.1" cy="278.3" rx="2.7" ry="2.5" fill="rgb(209,110,29)"/><ellipse cx="571.4" cy="274.8" rx="3.3" ry="2.5" fill="rgb(222,150,41)"/><ellipse cx="522.1" cy="283.8" rx="3.1" ry="2.9" fill="rgb(240,129,26)"/><ellipse cx="545.9" cy="286.3" rx="2.8" ry="2.6" fill="rgb(227,144,45)"/><ellipse cx="539.6" cy="290.1" rx="2.5" ry="2.2" fill="rgb(224,110,57)"/><ellipse cx="567.6" cy="285.0" rx="1.7" ry="1.7" fill="rgb(239,142,70)"/><ellipse cx="573.3" cy="284.6" rx="3.4" ry="2.5" fill="rgb(245,125,26)"/><ellipse cx="564.4" cy="298.0" rx="1.4" ry="2.9" fill="rgb(235,145,70)"/><ellipse cx="572.9" cy="296.5" rx="3.1" ry="3.3" fill="rgb(216,123,28)"/><ellipse cx="576.2" cy="305.3" rx="2.2" ry="2.2" fill="rgb(240,163,12)"/><ellipse cx="539.8" cy="311.0" rx="2.8" ry="2.0" fill="rgb(248,123,38)"/><ellipse cx="558.9" cy="314.6" rx="2.6" ry="2.6" fill="rgb(235,117,69)"/><ellipse cx="545.0" cy="317.1" rx="3.1" ry="2.4" fill="rgb(227,148,41)"/><ellipse cx="536.4" cy="322.4" rx="3.9" ry="2.0" fill="rgb(236,140,64)"/><ellipse cx="562.8" cy="325.8" rx="3.2" ry="2.0" fill="rgb(244,133,31)"/><ellipse cx="370.8" cy="330.2" rx="2.6" ry="2.5" fill="rgb(246,122,27)"/><ellipse cx="334.9" cy="389.0" rx="2.0" ry="1.8" fill="rgb(217,117,29)"/><ellipse cx="338.0" cy="391.9" rx="2.3" ry="2.1" fill="rgb(198,109,62)"/><ellipse cx="340.0" cy="396.4" rx="1.9" ry="1.9" fill="rgb(248,123,29)"/><ellipse cx="386.1" cy="392.9" rx="2.8" ry="2.4" fill="rgb(234,121,34)"/><ellipse cx="397.9" cy="390.4" rx="1.9" ry="2.5" fill="rgb(239,154,28)"/><ellipse cx="369.2" cy="400.2" rx="3.0" ry="2.9" fill="rgb(219,117,37)"/><ellipse cx="378.2" cy="402.7" rx="3.1" ry="3.1" fill="rgb(221,143,53)"/><ellipse cx="389.3" cy="399.9" rx="1.7" ry="1.7" fill="rgb(223,111,38)"/><ellipse cx="393.1" cy="403.1" rx="3.0" ry="3.0" fill="rgb(232,124,24)"/><ellipse cx="393.1" cy="410.8" rx="2.8" ry="2.0" fill="rgb(235,164,26)"/><ellipse cx="436.1" cy="343.2" rx="3.0" ry="2.8" fill="rgb(239,132,30)"/><ellipse cx="454.9" cy="352.8" rx="2.1" ry="2.6" fill="rgb(238,104,73)"/><ellipse cx="460.9" cy="356.0" rx="2.8" ry="1.8" fill="rgb(234,160,19)"/><ellipse cx="460.5" cy="363.9" rx="3.6" ry="2.4" fill="rgb(231,157,49)"/><ellipse cx="445.3" cy="369.6" rx="2.4" ry="2.4" fill="rgb(233,123,24)"/><ellipse cx="441.4" cy="375.1" rx="2.1" ry="2.0" fill="rgb(231,106,57)"/><ellipse cx="470.5" cy="370.9" rx="2.5" ry="1.9" fill="rgb(205,143,77)"/><ellipse cx="481.5" cy="373.1" rx="2.3" ry="2.1" fill="rgb(231,156,40)"/><ellipse cx="457.7" cy="380.8" rx="3.3" ry="3.5" fill="rgb(247,140,71)"/><ellipse cx="479.4" cy="379.4" rx="2.6" ry="2.6" fill="rgb(231,150,49)"/><ellipse cx="441.2" cy="386.4" rx="3.1" ry="3.0" fill="rgb(209,109,26)"/><ellipse cx="433.9" cy="389.6" rx="3.1" ry="3.0" fill="rgb(248,125,25)"/><ellipse cx="470.5" cy="387.8" rx="2.7" ry="2.6" fill="rgb(237,114,57)"/><ellipse cx="480.3" cy="387.5" rx="2.5" ry="2.6" fill="rgb(231,154,46)"/><ellipse cx="459.3" cy="392.6" rx="2.4" ry="2.3" fill="rgb(235,127,22)"/><ellipse cx="492.1" cy="391.3" rx="2.3" ry="2.2" fill="rgb(235,146,62)"/><ellipse cx="482.9" cy="393.8" rx="1.9" ry="1.8" fill="rgb(244,119,33)"/><ellipse cx="420.6" cy="398.3" rx="2.3" ry="2.2" fill="rgb(35,105,208)"/><ellipse cx="452.4" cy="398.0" rx="2.4" ry="2.5" fill="rgb(54,160,180)"/><ellipse cx="465.6" cy="397.4" rx="2.4" ry="2.5" fill="rgb(220,107,34)"/><ellipse cx="437.4" cy="400.8" rx="3.5" ry="3.4" fill="rgb(218,155,51)"/><ellipse cx="487.6" cy="400.8" rx="3.4" ry="2.1" fill="rgb(208,111,27)"/><ellipse cx="422.7" cy="404.3" rx="2.7" ry="2.5" fill="rgb(45,145,204)"/><ellipse cx="458.0" cy="404.3" rx="3.1" ry="2.4" fill="rgb(214,140,67)"/><ellipse cx="439.5" cy="406.6" rx="3.1" ry="2.9" fill="rgb(247,124,36)"/><ellipse cx="483.6" cy="407.8" rx="3.7" ry="3.3" fill="rgb(236,158,19)"/><ellipse cx="423.6" cy="409.4" rx="2.4" ry="2.4" fill="rgb(217,114,33)"/><ellipse cx="475.2" cy="409.4" rx="2.8" ry="2.5" fill="rgb(232,153,74)"/><ellipse cx="542.5" cy="336.5" rx="2.5" ry="3.0" fill="rgb(240,127,23)"/><ellipse cx="551.4" cy="333.6" rx="3.2" ry="3.4" fill="rgb(236,133,38)"/><ellipse cx="567.9" cy="335.7" rx="2.8" ry="2.7" fill="rgb(209,115,29)"/><ellipse cx="518.9" cy="345.7" rx="3.0" ry="2.3" fill="rgb(241,117,26)"/><ellipse cx="538.5" cy="347.0" rx="1.7" ry="1.7" fill="rgb(247,155,62)"/><ellipse cx="550.6" cy="346.3" rx="2.4" ry="2.5" fill="rgb(233,156,51)"/><ellipse cx="565.9" cy="350.3" rx="2.5" ry="3.2" fill="rgb(236,133,25)"/><ellipse cx="541.5" cy="354.7" rx="3.5" ry="3.4" fill="rgb(246,119,23)"/><ellipse cx="526.6" cy="358.8" rx="3.3" ry="2.9" fill="rgb(218,151,41)"/><ellipse cx="557.8" cy="359.7" rx="2.6" ry="2.6" fill="rgb(205,140,64)"/><ellipse cx="548.1" cy="365.6" rx="3.9" ry="3.1" fill="rgb(214,145,69)"/><ellipse cx="573.0" cy="368.4" rx="3.0" ry="3.1" fill="rgb(246,148,72)"/><ellipse cx="516.4" cy="370.9" rx="3.5" ry="3.1" fill="rgb(248,124,29)"/><ellipse cx="555.5" cy="371.8" rx="2.6" ry="2.4" fill="rgb(46,138,192)"/><ellipse cx="518.5" cy="374.5" rx="2.5" ry="1.5" fill="rgb(50,139,200)"/><ellipse cx="517.9" cy="378.6" rx="1.8" ry="1.8" fill="rgb(69,117,193)"/><ellipse cx="522.1" cy="377.9" rx="2.6" ry="2.6" fill="rgb(244,123,22)"/><ellipse cx="500.3" cy="381.5" rx="3.4" ry="1.9" fill="rgb(43,152,198)"/><ellipse cx="496.5" cy="378.2" rx="1.8" ry="1.0" fill="rgb(76,109,200)"/><ellipse cx="557.0" cy="377.7" rx="1.9" ry="1.9" fill="rgb(237,124,37)"/><ellipse cx="562.5" cy="376.9" rx="2.1" ry="1.8" fill="rgb(236,129,23)"/><ellipse cx="560.8" cy="381.5" rx="2.5" ry="2.6" fill="rgb(230,143,38)"/><ellipse cx="546.3" cy="383.4" rx="3.1" ry="3.3" fill="rgb(227,145,39)"/><ellipse cx="576.5" cy="383.9" rx="1.9" ry="1.8" fill="rgb(248,131,23)"/><ellipse cx="523.9" cy="387.8" rx="2.8" ry="2.5" fill="rgb(243,127,36)"/><ellipse cx="531.3" cy="389.0" rx="2.3" ry="3.3" fill="rgb(234,128,35)"/><ellipse cx="538.5" cy="391.3" rx="3.5" ry="3.4" fill="rgb(219,118,31)"/><ellipse cx="566.3" cy="387.5" rx="2.3" ry="2.4" fill="rgb(238,128,36)"/><ellipse cx="558.0" cy="390.6" rx="2.6" ry="2.1" fill="rgb(247,117,35)"/><ellipse cx="517.9" cy="391.3" rx="2.3" ry="2.2" fill="rgb(223,114,58)"/><ellipse cx="509.0" cy="398.3" rx="2.8" ry="2.4" fill="rgb(215,113,24)"/><ellipse cx="548.5" cy="397.4" rx="2.2" ry="2.0" fill="rgb(233,148,72)"/><ellipse cx="561.4" cy="397.9" rx="2.2" ry="2.2" fill="rgb(219,142,44)"/><ellipse cx="571.6" cy="396.8" rx="2.2" ry="2.3" fill="rgb(234,110,70)"/><ellipse cx="521.1" cy="401.5" rx="2.8" ry="2.8" fill="rgb(232,126,26)"/><ellipse cx="533.6" cy="400.8" rx="2.4" ry="2.5" fill="rgb(246,163,14)"/><ellipse cx="538.7" cy="401.8" rx="1.3" ry="2.9" fill="rgb(245,119,23)"/><ellipse cx="543.0" cy="403.8" rx="2.1" ry="2.8" fill="rgb(230,145,39)"/><ellipse cx="552.5" cy="401.2" rx="2.2" ry="2.0" fill="rgb(220,122,36)"/><ellipse cx="561.2" cy="404.6" rx="3.1" ry="3.0" fill="rgb(239,143,71)"/><ellipse cx="575.4" cy="403.4" rx="2.4" ry="2.3" fill="rgb(225,150,43)"/><ellipse cx="547.6" cy="407.6" rx="2.4" ry="2.3" fill="rgb(236,149,68)"/><ellipse cx="501.4" cy="410.8" rx="2.5" ry="2.5" fill="rgb(239,156,78)"/><ellipse cx="518.2" cy="410.4" rx="2.8" ry="2.4" fill="rgb(246,118,25)"/><ellipse cx="562.8" cy="327.0" rx="2.0" ry="2.0" fill="rgb(246,128,23)"/><ellipse cx="340.5" cy="424.3" rx="2.4" ry="2.2" fill="rgb(238,119,33)"/><ellipse cx="350.5" cy="422.2" rx="2.3" ry="2.1" fill="rgb(230,102,60)"/><ellipse cx="397.2" cy="423.1" rx="3.0" ry="2.9" fill="rgb(228,103,68)"/><ellipse cx="362.9" cy="431.7" rx="2.6" ry="1.8" fill="rgb(55,153,173)"/><ellipse cx="344.1" cy="437.5" rx="3.3" ry="3.0" fill="rgb(233,107,66)"/><ellipse cx="352.4" cy="437.2" rx="3.1" ry="3.2" fill="rgb(222,109,35)"/><ellipse cx="399.5" cy="433.6" rx="2.0" ry="1.9" fill="rgb(221,144,42)"/><ellipse cx="406.2" cy="438.3" rx="2.5" ry="2.3" fill="rgb(241,126,35)"/><ellipse cx="335.4" cy="443.6" rx="2.4" ry="2.4" fill="rgb(198,117,75)"/><ellipse cx="363.8" cy="443.8" rx="3.1" ry="2.2" fill="rgb(243,158,24)"/><ellipse cx="368.7" cy="450.2" rx="3.1" ry="2.8" fill="rgb(237,130,25)"/><ellipse cx="369.6" cy="455.3" rx="1.5" ry="1.5" fill="rgb(221,112,26)"/><ellipse cx="369.6" cy="459.4" rx="2.3" ry="2.2" fill="rgb(229,144,48)"/><ellipse cx="402.0" cy="450.8" rx="3.5" ry="2.7" fill="rgb(248,122,24)"/><ellipse cx="349.8" cy="453.4" rx="2.9" ry="2.9" fill="rgb(238,126,26)"/><ellipse cx="360.0" cy="454.4" rx="3.4" ry="3.1" fill="rgb(208,119,24)"/><ellipse cx="336.8" cy="455.9" rx="4.0" ry="3.0" fill="rgb(214,143,77)"/><ellipse cx="385.1" cy="459.5" rx="3.0" ry="2.6" fill="rgb(248,122,34)"/><ellipse cx="402.9" cy="462.3" rx="2.3" ry="3.4" fill="rgb(213,108,23)"/><ellipse cx="356.8" cy="462.3" rx="3.1" ry="2.7" fill="rgb(221,116,35)"/><ellipse cx="345.4" cy="463.3" rx="2.5" ry="2.3" fill="rgb(243,131,38)"/><ellipse cx="344.1" cy="467.8" rx="2.6" ry="1.5" fill="rgb(217,151,69)"/><ellipse cx="366.0" cy="467.8" rx="3.0" ry="2.1" fill="rgb(221,112,37)"/><ellipse cx="358.4" cy="470.3" rx="2.3" ry="2.2" fill="rgb(220,118,24)"/><ellipse cx="350.5" cy="472.5" rx="2.2" ry="2.2" fill="rgb(38,141,194)"/><ellipse cx="345.4" cy="474.4" rx="2.3" ry="2.1" fill="rgb(28,118,219)"/><ellipse cx="400.1" cy="474.8" rx="2.1" ry="3.7" fill="rgb(235,123,26)"/><ellipse cx="338.4" cy="479.8" rx="2.1" ry="2.2" fill="rgb(237,124,24)"/><ellipse cx="369.6" cy="479.5" rx="2.7" ry="2.5" fill="rgb(242,125,36)"/><ellipse cx="388.3" cy="482.6" rx="3.1" ry="3.3" fill="rgb(42,108,215)"/><ellipse cx="364.5" cy="485.8" rx="3.4" ry="3.2" fill="rgb(218,148,42)"/><ellipse cx="397.8" cy="487.1" rx="2.3" ry="2.5" fill="rgb(242,129,27)"/><ellipse cx="352.1" cy="489.0" rx="2.3" ry="3.8" fill="rgb(233,116,73)"/><ellipse cx="347.3" cy="493.2" rx="1.5" ry="1.5" fill="rgb(240,129,33)"/><ellipse cx="376.6" cy="492.8" rx="2.2" ry="2.1" fill="rgb(211,118,32)"/><ellipse cx="435.5" cy="413.9" rx="4.1" ry="2.5" fill="rgb(203,146,78)"/><ellipse cx="430.4" cy="416.8" rx="2.2" ry="2.3" fill="rgb(227,142,38)"/><ellipse cx="443.4" cy="412.6" rx="2.1" ry="2.2" fill="rgb(245,165,28)"/><ellipse cx="462.6" cy="412.6" rx="1.8" ry="1.6" fill="rgb(239,118,22)"/><ellipse cx="470.7" cy="417.5" rx="2.3" ry="2.3" fill="rgb(235,133,33)"/><ellipse cx="493.0" cy="415.2" rx="2.7" ry="3.9" fill="rgb(236,123,33)"/><ellipse cx="481.9" cy="419.6" rx="2.6" ry="2.2" fill="rgb(232,147,66)"/><ellipse cx="453.3" cy="420.3" rx="2.1" ry="3.1" fill="rgb(225,154,45)"/><ellipse cx="417.3" cy="421.2" rx="2.5" ry="2.7" fill="rgb(243,131,38)"/><ellipse cx="422.7" cy="424.3" rx="2.1" ry="2.3" fill="rgb(233,141,62)"/><ellipse cx="448.4" cy="424.3" rx="2.4" ry="2.2" fill="rgb(235,117,28)"/><ellipse cx="461.6" cy="425.1" rx="3.4" ry="3.3" fill="rgb(218,150,67)"/><ellipse cx="473.4" cy="425.4" rx="3.4" ry="3.2" fill="rgb(233,132,22)"/><ellipse cx="441.8" cy="427.5" rx="3.1" ry="2.9" fill="rgb(246,154,26)"/><ellipse cx="415.3" cy="432.4" rx="2.4" ry="2.2" fill="rgb(194,105,65)"/><ellipse cx="428.1" cy="431.7" rx="2.8" ry="2.8" fill="rgb(215,108,30)"/><ellipse cx="430.1" cy="435.5" rx="2.0" ry="1.9" fill="rgb(248,125,31)"/><ellipse cx="449.5" cy="431.5" rx="2.6" ry="2.5" fill="rgb(234,156,62)"/><ellipse cx="443.4" cy="433.9" rx="2.1" ry="2.0" fill="rgb(238,145,72)"/><ellipse cx="435.5" cy="434.9" rx="2.6" ry="3.4" fill="rgb(224,154,52)"/><ellipse cx="478.5" cy="433.9" rx="2.6" ry="1.8" fill="rgb(222,115,64)"/><ellipse cx="492.4" cy="437.5" rx="3.3" ry="3.2" fill="rgb(234,104,62)"/><ellipse cx="422.7" cy="439.7" rx="2.5" ry="4.0" fill="rgb(237,128,26)"/><ellipse cx="464.1" cy="439.4" rx="3.7" ry="3.5" fill="rgb(233,154,13)"/><ellipse cx="428.5" cy="443.2" rx="2.3" ry="2.2" fill="rgb(238,119,34)"/><ellipse cx="479.6" cy="442.8" rx="2.4" ry="2.3" fill="rgb(218,143,39)"/><ellipse cx="445.6" cy="443.4" rx="2.5" ry="2.3" fill="rgb(236,120,28)"/><ellipse cx="448.2" cy="447.3" rx="2.6" ry="2.6" fill="rgb(207,118,30)"/><ellipse cx="439.0" cy="449.3" rx="2.8" ry="2.2" fill="rgb(227,158,52)"/><ellipse cx="470.1" cy="448.9" rx="3.0" ry="2.6" fill="rgb(245,152,25)"/><ellipse cx="491.1" cy="449.8" rx="3.0" ry="2.8" fill="rgb(233,123,24)"/><ellipse cx="451.0" cy="452.5" rx="3.1" ry="2.7" fill="rgb(207,123,28)"/><ellipse cx="455.8" cy="451.5" rx="2.3" ry="2.3" fill="rgb(232,128,37)"/><ellipse cx="460.9" cy="452.7" rx="2.9" ry="3.0" fill="rgb(222,157,48)"/><ellipse cx="473.4" cy="457.8" rx="4.2" ry="2.8" fill="rgb(228,109,72)"/><ellipse cx="489.2" cy="460.8" rx="3.5" ry="3.6" fill="rgb(204,152,65)"/><ellipse cx="461.6" cy="467.6" rx="4.1" ry="3.0" fill="rgb(244,119,35)"/><ellipse cx="491.7" cy="470.3" rx="3.0" ry="2.9" fill="rgb(240,130,38)"/><ellipse cx="476.2" cy="480.7" rx="3.9" ry="4.0" fill="rgb(229,116,61)"/><ellipse cx="450.5" cy="481.8" rx="2.2" ry="2.2" fill="rgb(223,113,67)"/><ellipse cx="463.5" cy="483.3" rx="3.3" ry="4.0" fill="rgb(227,147,51)"/><ellipse cx="487.9" cy="482.0" rx="1.8" ry="1.6" fill="rgb(239,121,32)"/><ellipse cx="487.9" cy="485.2" rx="1.5" ry="1.5" fill="rgb(248,123,30)"/><ellipse cx="475.2" cy="487.4" rx="3.8" ry="3.7" fill="rgb(221,146,44)"/><ellipse cx="453.7" cy="492.6" rx="2.5" ry="2.3" fill="rgb(224,152,43)"/><ellipse cx="504.5" cy="414.5" rx="1.4" ry="3.2" fill="rgb(235,122,25)"/><ellipse cx="508.4" cy="413.3" rx="2.2" ry="2.3" fill="rgb(226,151,50)"/><ellipse cx="528.5" cy="413.9" rx="2.6" ry="2.6" fill="rgb(210,115,28)"/><ellipse cx="536.4" cy="417.3" rx="2.4" ry="3.1" fill="rgb(245,124,38)"/><ellipse cx="544.0" cy="416.5" rx="2.9" ry="2.6" fill="rgb(230,114,57)"/><ellipse cx="541.8" cy="418.4" rx="1.8" ry="1.6" fill="rgb(235,109,64)"/><ellipse cx="552.9" cy="417.3" rx="3.3" ry="3.1" fill="rgb(245,150,70)"/><ellipse cx="568.2" cy="413.3" rx="3.3" ry="3.3" fill="rgb(224,154,42)"/><ellipse cx="515.0" cy="419.6" rx="2.3" ry="2.1" fill="rgb(232,153,78)"/><ellipse cx="525.5" cy="419.4" rx="2.3" ry="2.2" fill="rgb(242,117,34)"/><ellipse cx="562.8" cy="421.3" rx="3.1" ry="2.0" fill="rgb(225,148,42)"/><ellipse cx="569.5" cy="422.2" rx="2.7" ry="2.4" fill="rgb(231,148,52)"/><ellipse cx="496.3" cy="424.1" rx="2.5" ry="2.7" fill="rgb(198,120,72)"/><ellipse cx="503.9" cy="424.3" rx="3.2" ry="2.2" fill="rgb(212,119,38)"/><ellipse cx="528.5" cy="423.8" rx="2.8" ry="2.6" fill="rgb(48,160,175)"/><ellipse cx="542.5" cy="424.3" rx="2.7" ry="2.4" fill="rgb(75,115,203)"/><ellipse cx="535.1" cy="426.3" rx="2.9" ry="2.2" fill="rgb(244,133,29)"/><ellipse cx="521.3" cy="428.5" rx="3.2" ry="2.2" fill="rgb(219,148,52)"/><ellipse cx="508.4" cy="431.3" rx="2.5" ry="2.3" fill="rgb(221,153,50)"/><ellipse cx="513.8" cy="430.8" rx="2.6" ry="3.2" fill="rgb(236,132,33)"/><ellipse cx="531.3" cy="431.1" rx="2.6" ry="2.5" fill="rgb(195,117,67)"/><ellipse cx="545.0" cy="431.1" rx="3.0" ry="3.2" fill="rgb(215,118,29)"/><ellipse cx="551.9" cy="432.0" rx="3.1" ry="3.1" fill="rgb(245,119,33)"/><ellipse cx="566.3" cy="429.8" rx="3.1" ry="3.0" fill="rgb(208,109,32)"/><ellipse cx="501.0" cy="435.8" rx="3.2" ry="3.0" fill="rgb(232,117,28)"/><ellipse cx="520.8" cy="435.5" rx="2.0" ry="1.8" fill="rgb(235,144,69)"/><ellipse cx="526.4" cy="436.2" rx="2.8" ry="2.5" fill="rgb(51,158,179)"/><ellipse cx="533.2" cy="436.4" rx="2.6" ry="2.7" fill="rgb(234,126,28)"/><ellipse cx="575.8" cy="435.3" rx="2.8" ry="3.3" fill="rgb(246,155,15)"/><ellipse cx="559.9" cy="438.3" rx="3.2" ry="3.2" fill="rgb(222,122,23)"/><ellipse cx="517.9" cy="440.3" rx="2.9" ry="2.7" fill="rgb(237,109,72)"/><ellipse cx="547.8" cy="441.3" rx="3.0" ry="3.0" fill="rgb(232,157,22)"/><ellipse cx="545.9" cy="444.8" rx="3.0" ry="1.9" fill="rgb(71,116,203)"/><ellipse cx="569.5" cy="442.3" rx="2.7" ry="2.8" fill="rgb(234,122,33)"/><ellipse cx="536.4" cy="444.2" rx="2.5" ry="2.2" fill="rgb(218,152,40)"/><ellipse cx="509.0" cy="446.4" rx="2.9" ry="2.9" fill="rgb(211,108,28)"/><ellipse cx="520.5" cy="445.7" rx="2.2" ry="2.1" fill="rgb(213,147,77)"/><ellipse cx="573.5" cy="446.0" rx="3.6" ry="2.5" fill="rgb(195,105,71)"/><ellipse cx="554.4" cy="448.0" rx="2.7" ry="1.9" fill="rgb(227,158,45)"/><ellipse cx="563.5" cy="448.9" rx="2.9" ry="1.9" fill="rgb(220,152,43)"/><ellipse cx="498.4" cy="451.1" rx="2.3" ry="2.0" fill="rgb(234,118,34)"/><ellipse cx="522.4" cy="450.6" rx="2.6" ry="2.4" fill="rgb(233,129,31)"/><ellipse cx="529.6" cy="450.2" rx="2.5" ry="2.5" fill="rgb(247,141,78)"/><ellipse cx="506.8" cy="453.0" rx="3.0" ry="2.9" fill="rgb(224,108,58)"/><ellipse cx="546.6" cy="451.8" rx="3.0" ry="1.7" fill="rgb(52,153,180)"/><ellipse cx="527.7" cy="455.3" rx="3.4" ry="3.1" fill="rgb(198,108,71)"/><ellipse cx="556.1" cy="454.0" rx="3.0" ry="3.0" fill="rgb(237,130,23)"/><ellipse cx="566.9" cy="456.6" rx="2.5" ry="2.6" fill="rgb(233,132,38)"/><ellipse cx="498.8" cy="456.8" rx="2.2" ry="1.0" fill="rgb(245,164,26)"/><ellipse cx="514.1" cy="460.4" rx="2.8" ry="2.8" fill="rgb(236,155,75)"/><ellipse cx="551.4" cy="459.5" rx="2.6" ry="2.7" fill="rgb(208,141,62)"/><ellipse cx="561.4" cy="461.0" rx="2.8" ry="2.9" fill="rgb(205,139,68)"/><ellipse cx="533.6" cy="463.3" rx="2.6" ry="3.1" fill="rgb(214,121,27)"/><ellipse cx="517.3" cy="464.8" rx="2.9" ry="2.9" fill="rgb(236,119,31)"/><ellipse cx="502.6" cy="465.5" rx="3.7" ry="3.5" fill="rgb(240,153,13)"/><ellipse cx="572.4" cy="464.4" rx="2.3" ry="2.5" fill="rgb(234,152,71)"/><ellipse cx="554.4" cy="467.0" rx="2.8" ry="1.7" fill="rgb(52,138,202)"/><ellipse cx="577.1" cy="468.9" rx="2.2" ry="2.9" fill="rgb(237,107,61)"/><ellipse cx="528.7" cy="469.9" rx="3.0" ry="2.0" fill="rgb(230,157,49)"/><ellipse cx="519.2" cy="472.2" rx="3.1" ry="3.0" fill="rgb(242,161,20)"/><ellipse cx="564.1" cy="473.1" rx="1.9" ry="2.9" fill="rgb(242,140,66)"/><ellipse cx="555.8" cy="474.6" rx="3.3" ry="3.1" fill="rgb(239,129,34)"/><ellipse cx="569.8" cy="474.8" rx="2.1" ry="3.1" fill="rgb(246,161,12)"/><ellipse cx="535.1" cy="475.6" rx="3.1" ry="3.0" fill="rgb(233,149,66)"/><ellipse cx="532.6" cy="479.5" rx="2.6" ry="2.8" fill="rgb(42,113,209)"/><ellipse cx="506.2" cy="478.4" rx="2.5" ry="2.5" fill="rgb(223,149,46)"/><ellipse cx="544.3" cy="478.8" rx="3.1" ry="3.9" fill="rgb(238,125,22)"/><ellipse cx="523.0" cy="481.8" rx="2.9" ry="2.7" fill="rgb(243,142,69)"/><ellipse cx="501.4" cy="483.7" rx="3.0" ry="3.0" fill="rgb(223,117,37)"/><ellipse cx="572.6" cy="482.9" rx="3.5" ry="2.7" fill="rgb(237,149,73)"/><ellipse cx="556.7" cy="484.6" rx="3.6" ry="2.6" fill="rgb(236,124,23)"/><ellipse cx="517.5" cy="485.2" rx="2.7" ry="2.4" fill="rgb(246,119,26)"/><ellipse cx="576.5" cy="486.5" rx="2.7" ry="2.5" fill="rgb(203,104,65)"/><ellipse cx="495.6" cy="487.7" rx="2.6" ry="2.7" fill="rgb(42,108,215)"/><ellipse cx="511.5" cy="489.3" rx="2.6" ry="3.5" fill="rgb(211,115,23)"/><ellipse cx="566.9" cy="493.1" rx="2.6" ry="2.5" fill="rgb(234,117,23)"/></g></svg>
<svg class="r" style="left:10px;top:446px;shape-rendering:crispEdges;" width="28" height="30" viewBox="0 0 28 30"><rect x="2" y="0" width="1" height="1" fill="#c96c1a"/><rect x="3" y="0" width="1" height="1" fill="#c96c1a"/><rect x="8" y="1" width="1" height="1" fill="#c96c1a"/><rect x="1" y="1" width="1" height="1" fill="#c96c1a"/><rect x="4" y="1" width="1" height="1" fill="#c96c1a"/><rect x="5" y="2" width="1" height="1" fill="#c96c1a"/><rect x="4" y="3" width="1" height="1" fill="#c96c1a"/><rect x="2" y="4" width="1" height="1" fill="#c96c1a"/><rect x="4" y="4" width="1" height="1" fill="#c96c1a"/><rect x="3" y="6" width="1" height="1" fill="#c96c1a"/><rect x="10" y="2" width="1" height="1" fill="#c96c1a"/><rect x="10" y="3" width="1" height="1" fill="#c96c1a"/><rect x="9" y="4" width="1" height="1" fill="#c96c1a"/><rect x="10" y="6" width="1" height="1" fill="#c96c1a"/><rect x="15" y="6" width="1" height="1" fill="#c96c1a"/><rect x="15" y="7" width="1" height="1" fill="#c96c1a"/><rect x="9" y="8" width="1" height="1" fill="#c96c1a"/><rect x="24" y="0" width="1" height="1" fill="#c96c1a"/><rect x="26" y="0" width="1" height="1" fill="#c96c1a"/><rect x="25" y="1" width="1" height="1" fill="#256fa6"/><rect x="26" y="1" width="1" height="1" fill="#c96c1a"/><rect x="24" y="2" width="1" height="1" fill="#256fa6"/><rect x="27" y="3" width="1" height="1" fill="#c96c1a"/><rect x="23" y="4" width="1" height="1" fill="#c96c1a"/><rect x="27" y="5" width="1" height="1" fill="#c96c1a"/><rect x="27" y="6" width="1" height="1" fill="#c96c1a"/><rect x="23" y="8" width="1" height="1" fill="#c96c1a"/><rect x="6" y="17" width="1" height="1" fill="#c96c1a"/><rect x="7" y="17" width="1" height="1" fill="#c96c1a"/><rect x="4" y="18" width="1" height="1" fill="#c96c1a"/><rect x="6" y="19" width="1" height="1" fill="#c96c1a"/><rect x="11" y="11" width="1" height="1" fill="#c96c1a"/><rect x="14" y="13" width="1" height="1" fill="#c96c1a"/><rect x="15" y="14" width="1" height="1" fill="#c96c1a"/><rect x="11" y="17" width="1" height="1" fill="#c96c1a"/><rect x="16" y="16" width="1" height="1" fill="#c96c1a"/><rect x="14" y="17" width="1" height="1" fill="#c96c1a"/><rect x="18" y="17" width="1" height="1" fill="#c96c1a"/><rect x="17" y="17" width="1" height="1" fill="#c96c1a"/><rect x="9" y="18" width="1" height="1" fill="#256fa6"/><rect x="10" y="18" width="1" height="1" fill="#256fa6"/><rect x="26" y="10" width="1" height="1" fill="#c96c1a"/><rect x="21" y="11" width="1" height="1" fill="#c96c1a"/><rect x="22" y="13" width="1" height="1" fill="#c96c1a"/><rect x="25" y="13" width="1" height="1" fill="#c96c1a"/><rect x="24" y="14" width="1" height="1" fill="#c96c1a"/><rect x="27" y="14" width="1" height="1" fill="#c96c1a"/><rect x="20" y="14" width="1" height="1" fill="#c96c1a"/><rect x="21" y="15" width="1" height="1" fill="#256fa6"/><rect x="19" y="16" width="1" height="1" fill="#256fa6"/><rect x="25" y="16" width="1" height="1" fill="#c96c1a"/><rect x="21" y="16" width="1" height="1" fill="#c96c1a"/><rect x="24" y="18" width="1" height="1" fill="#c96c1a"/><rect x="24" y="19" width="1" height="1" fill="#c96c1a"/><rect x="26" y="9" width="1" height="1" fill="#c96c1a"/><rect x="0" y="21" width="1" height="1" fill="#c96c1a"/><rect x="1" y="22" width="1" height="1" fill="#c96c1a"/><rect x="7" y="22" width="1" height="1" fill="#c96c1a"/><rect x="8" y="23" width="1" height="1" fill="#c96c1a"/><rect x="4" y="24" width="1" height="1" fill="#c96c1a"/><rect x="4" y="25" width="1" height="1" fill="#c96c1a"/><rect x="3" y="25" width="1" height="1" fill="#c96c1a"/><rect x="2" y="26" width="1" height="1" fill="#c96c1a"/><rect x="3" y="26" width="1" height="1" fill="#c96c1a"/><rect x="2" y="27" width="1" height="1" fill="#c96c1a"/><rect x="1" y="27" width="1" height="1" fill="#256fa6"/><rect x="0" y="28" width="1" height="1" fill="#c96c1a"/><rect x="4" y="28" width="1" height="1" fill="#c96c1a"/><rect x="2" y="29" width="1" height="1" fill="#c96c1a"/><rect x="4" y="29" width="1" height="1" fill="#c96c1a"/><rect x="11" y="20" width="1" height="1" fill="#c96c1a"/><rect x="15" y="20" width="1" height="1" fill="#c96c1a"/><rect x="18" y="20" width="1" height="1" fill="#c96c1a"/><rect x="16" y="20" width="1" height="1" fill="#c96c1a"/><rect x="14" y="21" width="1" height="1" fill="#c96c1a"/><rect x="10" y="22" width="1" height="1" fill="#c96c1a"/><rect x="11" y="22" width="1" height="1" fill="#c96c1a"/><rect x="16" y="22" width="1" height="1" fill="#c96c1a"/><rect x="10" y="23" width="1" height="1" fill="#c96c1a"/><rect x="16" y="23" width="1" height="1" fill="#c96c1a"/><rect x="12" y="24" width="1" height="1" fill="#c96c1a"/><rect x="15" y="24" width="1" height="1" fill="#c96c1a"/><rect x="17" y="24" width="1" height="1" fill="#c96c1a"/><rect x="13" y="24" width="1" height="1" fill="#c96c1a"/><rect x="14" y="24" width="1" height="1" fill="#c96c1a"/><rect x="17" y="25" width="1" height="1" fill="#c96c1a"/><rect x="18" y="27" width="1" height="1" fill="#c96c1a"/><rect x="14" y="28" width="1" height="1" fill="#c96c1a"/><rect x="17" y="28" width="1" height="1" fill="#c96c1a"/><rect x="16" y="29" width="1" height="1" fill="#c96c1a"/><rect x="13" y="29" width="1" height="1" fill="#c96c1a"/><rect x="23" y="20" width="1" height="1" fill="#c96c1a"/><rect x="24" y="20" width="1" height="1" fill="#c96c1a"/><rect x="25" y="20" width="1" height="1" fill="#c96c1a"/><rect x="26" y="20" width="1" height="1" fill="#c96c1a"/><rect x="19" y="21" width="1" height="1" fill="#c96c1a"/><rect x="22" y="21" width="1" height="1" fill="#256fa6"/><rect x="23" y="21" width="1" height="1" fill="#256fa6"/><rect x="19" y="22" width="1" height="1" fill="#c96c1a"/><rect x="20" y="22" width="1" height="1" fill="#c96c1a"/><rect x="22" y="22" width="1" height="1" fill="#256fa6"/><rect x="25" y="23" width="1" height="1" fill="#c96c1a"/><rect x="24" y="23" width="1" height="1" fill="#256fa6"/><rect x="26" y="23" width="1" height="1" fill="#c96c1a"/><rect x="20" y="24" width="1" height="1" fill="#c96c1a"/><rect x="25" y="24" width="1" height="1" fill="#c96c1a"/><rect x="21" y="24" width="1" height="1" fill="#c96c1a"/><rect x="25" y="25" width="1" height="1" fill="#c96c1a"/><rect x="18" y="25" width="1" height="1" fill="#c96c1a"/><rect x="24" y="25" width="1" height="1" fill="#c96c1a"/><rect x="22" y="26" width="1" height="1" fill="#c96c1a"/><rect x="27" y="26" width="1" height="1" fill="#c96c1a"/><rect x="25" y="27" width="1" height="1" fill="#c96c1a"/><rect x="22" y="27" width="1" height="1" fill="#c96c1a"/><rect x="21" y="28" width="1" height="1" fill="#c96c1a"/><rect x="19" y="28" width="1" height="1" fill="#c96c1a"/><rect x="27" y="28" width="1" height="1" fill="#c96c1a"/><rect x="18" y="29" width="1" height="1" fill="#256fa6"/><rect x="20" y="29" width="1" height="1" fill="#c96c1a"/></svg>
<svg class="r" style="left:10px;top:480px;shape-rendering:crispEdges;" width="28" height="30" viewBox="0 0 28 30"><rect x="1" y="0" width="1" height="1" fill="#c06ad0cc"/><rect x="3" y="0" width="1" height="1" fill="#d0608099"/><rect x="3" y="2" width="1" height="1" fill="#40c0a099"/><rect x="4" y="4" width="1" height="1" fill="#40c0a0cc"/><rect x="5" y="6" width="1" height="1" fill="#40c0a0cc"/><rect x="6" y="6" width="1" height="1" fill="#c0a06099"/><rect x="7" y="6" width="1" height="1" fill="#a0c04077"/><rect x="4" y="7" width="1" height="1" fill="#c0a060cc"/><rect x="6" y="7" width="1" height="1" fill="#7060d077"/><rect x="2" y="9" width="1" height="1" fill="#40c0a0cc"/><rect x="6" y="8" width="1" height="1" fill="#40c0a077"/><rect x="9" y="1" width="1" height="1" fill="#a0c04077"/><rect x="10" y="1" width="1" height="1" fill="#c0a06099"/><rect x="9" y="3" width="1" height="1" fill="#c0a06099"/><rect x="12" y="4" width="1" height="1" fill="#d08a4077"/><rect x="10" y="6" width="1" height="1" fill="#d0608099"/><rect x="11" y="6" width="1" height="1" fill="#40c0a077"/><rect x="24" y="0" width="1" height="1" fill="#e08030cc"/><rect x="26" y="0" width="1" height="1" fill="#a0c04077"/><rect x="25" y="1" width="1" height="1" fill="#62c070cc"/><rect x="24" y="2" width="1" height="1" fill="#62c07077"/><rect x="21" y="4" width="1" height="1" fill="#c06ad099"/><rect x="24" y="4" width="1" height="1" fill="#c06ad0cc"/><rect x="27" y="5" width="1" height="1" fill="#c06ad0cc"/><rect x="27" y="6" width="1" height="1" fill="#c06ad099"/><rect x="25" y="7" width="1" height="1" fill="#d08a4077"/><rect x="23" y="8" width="1" height="1" fill="#7060d077"/><rect x="4" y="9" width="1" height="1" fill="#d08a40cc"/><rect x="0" y="17" width="1" height="1" fill="#62c07099"/><rect x="5" y="18" width="1" height="1" fill="#c06ad099"/><rect x="6" y="18" width="1" height="1" fill="#e0803077"/><rect x="11" y="11" width="1" height="1" fill="#62c07077"/><rect x="13" y="12" width="1" height="1" fill="#62c070cc"/><rect x="14" y="13" width="1" height="1" fill="#d08a4077"/><rect x="14" y="16" width="1" height="1" fill="#d0608099"/><rect x="11" y="18" width="1" height="1" fill="#c06ad0cc"/><rect x="10" y="19" width="1" height="1" fill="#a0c04099"/><rect x="16" y="19" width="1" height="1" fill="#d0608077"/><rect x="23" y="10" width="1" height="1" fill="#d08a40cc"/><rect x="23" y="12" width="1" height="1" fill="#62c070cc"/><rect x="25" y="14" width="1" height="1" fill="#50b0c077"/><rect x="21" y="15" width="1" height="1" fill="#7060d077"/><rect x="25" y="15" width="1" height="1" fill="#40c0a077"/><rect x="24" y="16" width="1" height="1" fill="#a0c040cc"/><rect x="21" y="16" width="1" height="1" fill="#e0803099"/><rect x="23" y="17" width="1" height="1" fill="#a0c04099"/><rect x="25" y="17" width="1" height="1" fill="#62c070cc"/><rect x="20" y="18" width="1" height="1" fill="#c06ad099"/><rect x="21" y="18" width="1" height="1" fill="#e08030cc"/><rect x="24" y="18" width="1" height="1" fill="#50b0c099"/><rect x="21" y="19" width="1" height="1" fill="#7060d0cc"/><rect x="3" y="23" width="1" height="1" fill="#d0608099"/><rect x="4" y="24" width="1" height="1" fill="#d08a4099"/><rect x="1" y="24" width="1" height="1" fill="#7060d099"/><rect x="3" y="25" width="1" height="1" fill="#d0608099"/><rect x="1" y="26" width="1" height="1" fill="#e0803077"/><rect x="3" y="26" width="1" height="1" fill="#62c070cc"/><rect x="1" y="27" width="1" height="1" fill="#d08a4099"/><rect x="7" y="27" width="1" height="1" fill="#62c07077"/><rect x="0" y="28" width="1" height="1" fill="#c06ad0cc"/><rect x="4" y="28" width="1" height="1" fill="#7060d0cc"/><rect x="6" y="28" width="1" height="1" fill="#a0c04099"/><rect x="1" y="29" width="1" height="1" fill="#7060d0cc"/><rect x="15" y="20" width="1" height="1" fill="#50b0c099"/><rect x="18" y="20" width="1" height="1" fill="#a0c04077"/><rect x="16" y="20" width="1" height="1" fill="#c0a06099"/><rect x="13" y="20" width="1" height="1" fill="#e0803099"/><rect x="9" y="20" width="1" height="1" fill="#d08a4099"/><rect x="15" y="21" width="1" height="1" fill="#7060d077"/><rect x="11" y="22" width="1" height="1" fill="#62c07077"/><rect x="10" y="23" width="1" height="1" fill="#c06ad099"/><rect x="16" y="23" width="1" height="1" fill="#c0a06077"/><rect x="14" y="24" width="1" height="1" fill="#7060d077"/><rect x="15" y="25" width="1" height="1" fill="#50b0c099"/><rect x="17" y="25" width="1" height="1" fill="#e0803077"/><rect x="18" y="27" width="1" height="1" fill="#d08a40cc"/><rect x="13" y="29" width="1" height="1" fill="#62c07099"/><rect x="22" y="20" width="1" height="1" fill="#62c07077"/><rect x="26" y="21" width="1" height="1" fill="#d08a4099"/><rect x="22" y="21" width="1" height="1" fill="#d08a40cc"/><rect x="24" y="22" width="1" height="1" fill="#a0c040cc"/><rect x="22" y="22" width="1" height="1" fill="#d0608099"/><rect x="24" y="23" width="1" height="1" fill="#62c07099"/><rect x="26" y="23" width="1" height="1" fill="#d0608099"/><rect x="20" y="24" width="1" height="1" fill="#7060d077"/><rect x="21" y="23" width="1" height="1" fill="#62c07077"/><rect x="18" y="24" width="1" height="1" fill="#40c0a077"/><rect x="19" y="24" width="1" height="1" fill="#40c0a0cc"/><rect x="18" y="25" width="1" height="1" fill="#a0c040cc"/><rect x="27" y="26" width="1" height="1" fill="#c0a06077"/><rect x="26" y="27" width="1" height="1" fill="#c0a060cc"/><rect x="25" y="27" width="1" height="1" fill="#a0c040cc"/><rect x="22" y="28" width="1" height="1" fill="#50b0c099"/><rect x="19" y="28" width="1" height="1" fill="#7060d099"/><rect x="24" y="28" width="1" height="1" fill="#a0c04099"/><rect x="21" y="28" width="1" height="1" fill="#e0803077"/><rect x="25" y="28" width="1" height="1" fill="#a0c04077"/><rect x="27" y="28" width="1" height="1" fill="#d0608077"/></svg>
<svg class="r" style="left:10px;top:514px;shape-rendering:crispEdges;" width="28" height="30" viewBox="0 0 28 30"><rect x="0" y="0" width="28" height="30" fill="#0b0b0b"/><rect x="2" y="0" width="1" height="1" fill="rgb(46,46,46)"/><rect x="3" y="0" width="1" height="1" fill="rgb(55,55,55)"/><rect x="4" y="0" width="1" height="1" fill="rgb(30,30,30)"/><rect x="5" y="1" width="1" height="1" fill="rgb(120,120,120)"/><rect x="8" y="1" width="1" height="1" fill="rgb(38,38,38)"/><rect x="1" y="1" width="1" height="1" fill="rgb(55,55,55)"/><rect x="2" y="1" width="1" height="1" fill="rgb(65,65,65)"/><rect x="4" y="1" width="1" height="1" fill="rgb(38,38,38)"/><rect x="7" y="3" width="1" height="1" fill="rgb(55,55,55)"/><rect x="8" y="2" width="1" height="1" fill="rgb(80,80,80)"/><rect x="4" y="3" width="1" height="1" fill="rgb(38,38,38)"/><rect x="6" y="3" width="1" height="1" fill="rgb(65,65,65)"/><rect x="4" y="4" width="1" height="1" fill="rgb(120,120,120)"/><rect x="6" y="5" width="1" height="1" fill="rgb(55,55,55)"/><rect x="5" y="5" width="1" height="1" fill="rgb(55,55,55)"/><rect x="3" y="6" width="1" height="1" fill="rgb(55,55,55)"/><rect x="4" y="6" width="1" height="1" fill="rgb(55,55,55)"/><rect x="5" y="6" width="1" height="1" fill="rgb(38,38,38)"/><rect x="6" y="6" width="1" height="1" fill="rgb(30,30,30)"/><rect x="6" y="7" width="1" height="1" fill="rgb(120,120,120)"/><rect x="2" y="9" width="1" height="1" fill="rgb(46,46,46)"/><rect x="6" y="8" width="1" height="1" fill="rgb(65,65,65)"/><rect x="10" y="1" width="1" height="1" fill="rgb(65,65,65)"/><rect x="10" y="3" width="1" height="1" fill="rgb(30,30,30)"/><rect x="12" y="4" width="1" height="1" fill="rgb(65,65,65)"/><rect x="9" y="4" width="1" height="1" fill="rgb(38,38,38)"/><rect x="10" y="6" width="1" height="1" fill="rgb(46,46,46)"/><rect x="11" y="6" width="1" height="1" fill="rgb(65,65,65)"/><rect x="9" y="6" width="1" height="1" fill="rgb(80,80,80)"/><rect x="15" y="6" width="1" height="1" fill="rgb(80,80,80)"/><rect x="15" y="7" width="1" height="1" fill="rgb(65,65,65)"/><rect x="24" y="0" width="1" height="1" fill="rgb(55,55,55)"/><rect x="27" y="0" width="1" height="1" fill="rgb(55,55,55)"/><rect x="25" y="1" width="1" height="1" fill="rgb(30,30,30)"/><rect x="24" y="2" width="1" height="1" fill="rgb(120,120,120)"/><rect x="27" y="3" width="1" height="1" fill="rgb(120,120,120)"/><rect x="24" y="4" width="1" height="1" fill="rgb(46,46,46)"/><rect x="23" y="4" width="1" height="1" fill="rgb(46,46,46)"/><rect x="26" y="4" width="1" height="1" fill="rgb(30,30,30)"/><rect x="27" y="5" width="1" height="1" fill="rgb(30,30,30)"/><rect x="27" y="6" width="1" height="1" fill="rgb(55,55,55)"/><rect x="24" y="8" width="1" height="1" fill="rgb(120,120,120)"/><rect x="0" y="17" width="1" height="1" fill="rgb(55,55,55)"/><rect x="7" y="17" width="1" height="1" fill="rgb(80,80,80)"/><rect x="4" y="18" width="1" height="1" fill="rgb(80,80,80)"/><rect x="5" y="18" width="1" height="1" fill="rgb(65,65,65)"/><rect x="6" y="18" width="1" height="1" fill="rgb(120,120,120)"/><rect x="6" y="19" width="1" height="1" fill="rgb(55,55,55)"/><rect x="11" y="11" width="1" height="1" fill="rgb(80,80,80)"/><rect x="14" y="13" width="1" height="1" fill="rgb(65,65,65)"/><rect x="15" y="14" width="1" height="1" fill="rgb(65,65,65)"/><rect x="16" y="15" width="1" height="1" fill="rgb(38,38,38)"/><rect x="11" y="17" width="1" height="1" fill="rgb(55,55,55)"/><rect x="16" y="16" width="1" height="1" fill="rgb(65,65,65)"/><rect x="14" y="17" width="1" height="1" fill="rgb(80,80,80)"/><rect x="17" y="17" width="1" height="1" fill="rgb(80,80,80)"/><rect x="15" y="18" width="1" height="1" fill="rgb(46,46,46)"/><rect x="11" y="18" width="1" height="1" fill="rgb(46,46,46)"/><rect x="14" y="18" width="1" height="1" fill="rgb(120,120,120)"/><rect x="12" y="19" width="1" height="1" fill="rgb(46,46,46)"/><rect x="17" y="19" width="1" height="1" fill="rgb(30,30,30)"/><rect x="10" y="19" width="1" height="1" fill="rgb(30,30,30)"/><rect x="16" y="19" width="1" height="1" fill="rgb(80,80,80)"/><rect x="23" y="10" width="1" height="1" fill="rgb(46,46,46)"/><rect x="24" y="10" width="1" height="1" fill="rgb(80,80,80)"/><rect x="26" y="10" width="1" height="1" fill="rgb(38,38,38)"/><rect x="23" y="11" width="1" height="1" fill="rgb(80,80,80)"/><rect x="24" y="11" width="1" height="1" fill="rgb(30,30,30)"/><rect x="26" y="12" width="1" height="1" fill="rgb(46,46,46)"/><rect x="23" y="12" width="1" height="1" fill="rgb(38,38,38)"/><rect x="25" y="13" width="1" height="1" fill="rgb(38,38,38)"/><rect x="27" y="14" width="1" height="1" fill="rgb(38,38,38)"/><rect x="20" y="14" width="1" height="1" fill="rgb(55,55,55)"/><rect x="21" y="15" width="1" height="1" fill="rgb(30,30,30)"/><rect x="19" y="16" width="1" height="1" fill="rgb(38,38,38)"/><rect x="25" y="15" width="1" height="1" fill="rgb(65,65,65)"/><rect x="24" y="16" width="1" height="1" fill="rgb(80,80,80)"/><rect x="21" y="16" width="1" height="1" fill="rgb(65,65,65)"/><rect x="26" y="16" width="1" height="1" fill="rgb(46,46,46)"/><rect x="21" y="17" width="1" height="1" fill="rgb(46,46,46)"/><rect x="25" y="18" width="1" height="1" fill="rgb(38,38,38)"/><rect x="22" y="18" width="1" height="1" fill="rgb(65,65,65)"/><rect x="23" y="18" width="1" height="1" fill="rgb(55,55,55)"/><rect x="24" y="18" width="1" height="1" fill="rgb(80,80,80)"/><rect x="24" y="19" width="1" height="1" fill="rgb(120,120,120)"/><rect x="19" y="19" width="1" height="1" fill="rgb(80,80,80)"/><rect x="21" y="19" width="1" height="1" fill="rgb(46,46,46)"/><rect x="26" y="9" width="1" height="1" fill="rgb(38,38,38)"/><rect x="0" y="21" width="1" height="1" fill="rgb(120,120,120)"/><rect x="1" y="21" width="1" height="1" fill="rgb(46,46,46)"/><rect x="2" y="22" width="1" height="1" fill="rgb(65,65,65)"/><rect x="7" y="22" width="1" height="1" fill="rgb(55,55,55)"/><rect x="8" y="23" width="1" height="1" fill="rgb(30,30,30)"/><rect x="4" y="24" width="1" height="1" fill="rgb(38,38,38)"/><rect x="4" y="25" width="1" height="1" fill="rgb(65,65,65)"/><rect x="7" y="24" width="1" height="1" fill="rgb(30,30,30)"/><rect x="1" y="24" width="1" height="1" fill="rgb(65,65,65)"/><rect x="5" y="25" width="1" height="1" fill="rgb(65,65,65)"/><rect x="2" y="26" width="1" height="1" fill="rgb(46,46,46)"/><rect x="3" y="26" width="1" height="1" fill="rgb(30,30,30)"/><rect x="1" y="27" width="1" height="1" fill="rgb(120,120,120)"/><rect x="0" y="28" width="1" height="1" fill="rgb(55,55,55)"/><rect x="4" y="28" width="1" height="1" fill="rgb(120,120,120)"/><rect x="3" y="28" width="1" height="1" fill="rgb(38,38,38)"/><rect x="2" y="29" width="1" height="1" fill="rgb(55,55,55)"/><rect x="11" y="20" width="1" height="1" fill="rgb(120,120,120)"/><rect x="13" y="20" width="1" height="1" fill="rgb(120,120,120)"/><rect x="9" y="20" width="1" height="1" fill="rgb(65,65,65)"/><rect x="10" y="21" width="1" height="1" fill="rgb(46,46,46)"/><rect x="11" y="22" width="1" height="1" fill="rgb(55,55,55)"/><rect x="12" y="22" width="1" height="1" fill="rgb(80,80,80)"/><rect x="16" y="22" width="1" height="1" fill="rgb(120,120,120)"/><rect x="10" y="23" width="1" height="1" fill="rgb(120,120,120)"/><rect x="16" y="23" width="1" height="1" fill="rgb(80,80,80)"/><rect x="12" y="23" width="1" height="1" fill="rgb(65,65,65)"/><rect x="13" y="24" width="1" height="1" fill="rgb(30,30,30)"/><rect x="17" y="24" width="1" height="1" fill="rgb(55,55,55)"/><rect x="14" y="24" width="1" height="1" fill="rgb(55,55,55)"/><rect x="14" y="26" width="1" height="1" fill="rgb(80,80,80)"/><rect x="18" y="27" width="1" height="1" fill="rgb(120,120,120)"/><rect x="14" y="28" width="1" height="1" fill="rgb(46,46,46)"/><rect x="17" y="28" width="1" height="1" fill="rgb(120,120,120)"/><rect x="16" y="29" width="1" height="1" fill="rgb(30,30,30)"/><rect x="19" y="20" width="1" height="1" fill="rgb(80,80,80)"/><rect x="22" y="20" width="1" height="1" fill="rgb(65,65,65)"/><rect x="23" y="20" width="1" height="1" fill="rgb(80,80,80)"/><rect x="26" y="20" width="1" height="1" fill="rgb(120,120,120)"/><rect x="20" y="20" width="1" height="1" fill="rgb(30,30,30)"/><rect x="18" y="21" width="1" height="1" fill="rgb(65,65,65)"/><rect x="22" y="21" width="1" height="1" fill="rgb(38,38,38)"/><rect x="23" y="21" width="1" height="1" fill="rgb(46,46,46)"/><rect x="21" y="21" width="1" height="1" fill="rgb(30,30,30)"/><rect x="24" y="22" width="1" height="1" fill="rgb(46,46,46)"/><rect x="26" y="22" width="1" height="1" fill="rgb(120,120,120)"/><rect x="21" y="22" width="1" height="1" fill="rgb(65,65,65)"/><rect x="22" y="22" width="1" height="1" fill="rgb(80,80,80)"/><rect x="25" y="23" width="1" height="1" fill="rgb(30,30,30)"/><rect x="21" y="23" width="1" height="1" fill="rgb(30,30,30)"/><rect x="24" y="23" width="1" height="1" fill="rgb(120,120,120)"/><rect x="26" y="23" width="1" height="1" fill="rgb(120,120,120)"/><rect x="20" y="24" width="1" height="1" fill="rgb(80,80,80)"/><rect x="25" y="24" width="1" height="1" fill="rgb(120,120,120)"/><rect x="26" y="24" width="1" height="1" fill="rgb(46,46,46)"/><rect x="22" y="25" width="1" height="1" fill="rgb(55,55,55)"/><rect x="25" y="25" width="1" height="1" fill="rgb(38,38,38)"/><rect x="18" y="25" width="1" height="1" fill="rgb(65,65,65)"/><rect x="20" y="25" width="1" height="1" fill="rgb(65,65,65)"/><rect x="24" y="25" width="1" height="1" fill="rgb(38,38,38)"/><rect x="22" y="26" width="1" height="1" fill="rgb(38,38,38)"/><rect x="25" y="26" width="1" height="1" fill="rgb(55,55,55)"/><rect x="27" y="26" width="1" height="1" fill="rgb(120,120,120)"/><rect x="26" y="27" width="1" height="1" fill="rgb(46,46,46)"/><rect x="22" y="27" width="1" height="1" fill="rgb(120,120,120)"/><rect x="22" y="28" width="1" height="1" fill="rgb(120,120,120)"/><rect x="24" y="28" width="1" height="1" fill="rgb(55,55,55)"/><rect x="21" y="28" width="1" height="1" fill="rgb(65,65,65)"/><rect x="19" y="28" width="1" height="1" fill="rgb(46,46,46)"/><rect x="27" y="28" width="1" height="1" fill="rgb(46,46,46)"/></svg>
</div></body></html>
